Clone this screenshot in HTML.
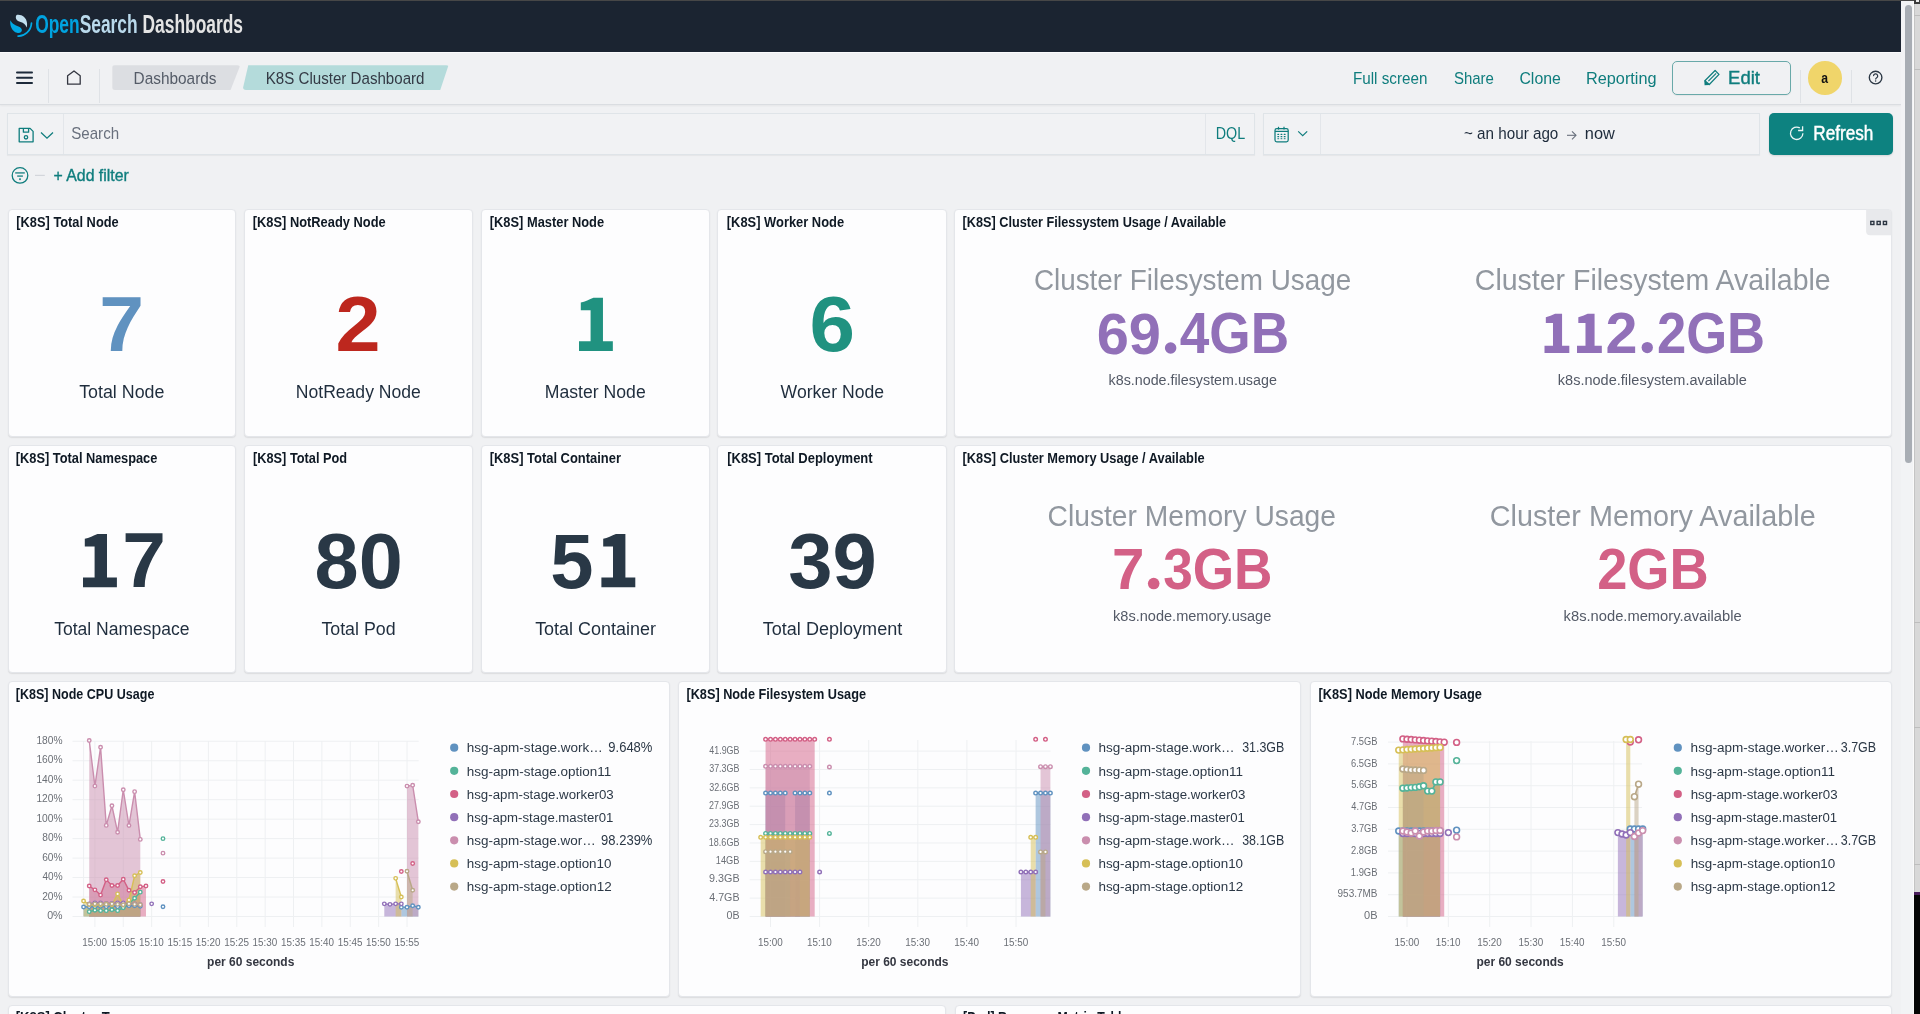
<!DOCTYPE html>
<html><head><meta charset="utf-8"><title>K8S Cluster Dashboard - OpenSearch Dashboards</title>
<style>
html,body{margin:0;padding:0;width:1920px;height:1014px;overflow:hidden;background:#f0f1f3;font-family:"Liberation Sans",sans-serif;}
.abs{position:absolute}
#hdr{position:absolute;left:0;top:0;width:1901px;height:52px;background:#1b2431;box-sizing:border-box}
#nav{position:absolute;left:0;top:52px;width:1901px;height:52.5px;background:#f0f1f3;border-top:1px solid #fbfbfc;border-bottom:1px solid #dadde1;box-sizing:border-box;box-shadow:0 1px 2px rgba(0,0,0,.05)}
.vdiv{position:absolute;width:1px;background:#dfe2e6}
.crumb1{position:absolute;left:112.3px;top:65.3px;width:128px;height:24.6px;background:#dcdee2;border-radius:3px;clip-path:polygon(0 0,100% 0,92.4% 100%,0 100%)}
.crumb2{position:absolute;left:242.5px;top:65.3px;width:206px;height:24.6px;background:#b4dbdb;border-radius:3px;clip-path:polygon(2.8% 0,100% 0,96% 100%,0 100%)}
.btn-edit{position:absolute;left:1672.3px;top:61.1px;width:118.5px;height:34.1px;box-sizing:border-box;border:1px solid #69a9a9;border-radius:5px;background:#f0f1f3;box-shadow:0 1px 1px rgba(0,0,0,.05)}
.avatar{position:absolute;left:1808.2px;top:61.2px;width:33.6px;height:33.6px;border-radius:50%;background:#f0d56a}
.box{position:absolute;box-sizing:border-box;border:1px solid #dfe4e8;background:#f1f2f4;box-shadow:0 1px 1px rgba(0,0,0,.04)}
.refresh{position:absolute;left:1768.6px;top:112.9px;width:124.3px;height:41.7px;background:#0d8280;border-radius:5px;box-shadow:0 1px 2px rgba(0,0,0,.12)}
.pnl{position:absolute;box-sizing:border-box;background:#fdfdfe;border:1px solid #e4e6ea;border-radius:4px;box-shadow:0 1px 1px rgba(0,0,0,.05),0 1px 2px rgba(0,0,0,.04)}
#sb{position:absolute;left:1901px;top:1px;width:13.3px;height:1014px;background:#f2f3f5;box-sizing:border-box;border-right:1px solid #fafafa}
#sbt{position:absolute;left:1905px;top:4.5px;width:7px;height:458px;background:#a8adb4;border-radius:4px}
#edge{position:absolute;left:1914.3px;top:0;width:6px;height:1014px;background:#d8d8d8;border-left:1px solid #c4c4c4;box-sizing:border-box}
.eln{position:absolute;left:1914.3px;width:6px;height:1px;background:#bdbdbd}
svg.ov{position:absolute;left:0;top:0;width:1920px;height:1014px;overflow:visible;will-change:transform}
svg text{font-family:"Liberation Sans",sans-serif;white-space:pre}
</style></head><body>
<div id="hdr"></div>
<div id="nav"></div>
<div class="vdiv" style="left:48px;top:69.4px;height:33.6px"></div>
<div class="vdiv" style="left:99px;top:69.4px;height:33.6px"></div>
<div class="crumb1"></div><div class="crumb2"></div>
<div class="btn-edit"></div>
<div class="vdiv" style="left:1799.5px;top:69.5px;height:33.5px"></div>
<div class="avatar"></div>
<div class="vdiv" style="left:1851px;top:69.5px;height:33.5px"></div>
<div class="box" style="left:7px;top:112.8px;width:1247.5px;height:41.8px"></div>
<div class="vdiv" style="left:63px;top:114px;height:39.5px;background:#e3e6ea"></div>
<div class="vdiv" style="left:1205px;top:114px;height:39.5px;background:#e3e6ea"></div>
<div class="box" style="left:1262.9px;top:112.8px;width:497.1px;height:41.8px"></div>
<div class="vdiv" style="left:1320px;top:114px;height:39.5px;background:#e3e6ea"></div>
<div class="refresh"></div>
<div class="pnl" style="left:7.50px;top:209.20px;width:228.10px;height:227.60px"></div><div class="pnl" style="left:244.40px;top:209.20px;width:228.40px;height:227.60px"></div><div class="pnl" style="left:480.80px;top:209.20px;width:229.00px;height:227.60px"></div><div class="pnl" style="left:717.10px;top:209.20px;width:229.80px;height:227.60px"></div><div class="pnl" style="left:953.90px;top:209.20px;width:937.90px;height:227.60px"></div><div class="pnl" style="left:7.50px;top:445.00px;width:228.10px;height:227.60px"></div><div class="pnl" style="left:244.40px;top:445.00px;width:228.40px;height:227.60px"></div><div class="pnl" style="left:480.80px;top:445.00px;width:229.00px;height:227.60px"></div><div class="pnl" style="left:717.10px;top:445.00px;width:229.80px;height:227.60px"></div><div class="pnl" style="left:953.90px;top:445.00px;width:937.90px;height:227.60px"></div><div class="pnl" style="left:7.50px;top:681.10px;width:662.10px;height:315.80px"></div><div class="pnl" style="left:678.00px;top:681.10px;width:623.40px;height:315.80px"></div><div class="pnl" style="left:1310.00px;top:681.10px;width:581.80px;height:315.80px"></div><div class="pnl" style="left:7.50px;top:1005.40px;width:938.00px;height:95.10px"></div><div class="pnl" style="left:954.50px;top:1005.40px;width:937.30px;height:95.10px"></div>
<div id="sb"></div><div id="sbt"></div><div id="edge"></div><div class="eln" style="top:14.5px"></div><div class="eln" style="top:69px"></div><div class="eln" style="top:622px"></div><div class="eln" style="top:727px"></div><div class="eln" style="top:863.5px"></div><div class="abs" style="left:1914.3px;top:892px;width:6px;height:122px;background:#050505;border-top:3px solid #4a1d5c;box-sizing:border-box"></div><div class="abs" style="left:0;top:0;width:1920px;height:1px;background:#474747"></div><div class="abs" style="left:1914.3px;top:0;width:5.7px;height:3.5px;background:#3a3a3a"></div><div class="abs" style="left:1916.3px;top:0;width:3px;height:2px;background:#e9e9e9"></div>
<svg class="ov" viewBox="0 0 1920 1014">
<line x1="72.5" y1="916.50" x2="418.7" y2="916.50" stroke="#eef0f2" stroke-width="1"/><line x1="72.5" y1="897.03" x2="418.7" y2="897.03" stroke="#eef0f2" stroke-width="1"/><line x1="72.5" y1="877.56" x2="418.7" y2="877.56" stroke="#eef0f2" stroke-width="1"/><line x1="72.5" y1="858.09" x2="418.7" y2="858.09" stroke="#eef0f2" stroke-width="1"/><line x1="72.5" y1="838.62" x2="418.7" y2="838.62" stroke="#eef0f2" stroke-width="1"/><line x1="72.5" y1="819.15" x2="418.7" y2="819.15" stroke="#eef0f2" stroke-width="1"/><line x1="72.5" y1="799.68" x2="418.7" y2="799.68" stroke="#eef0f2" stroke-width="1"/><line x1="72.5" y1="780.21" x2="418.7" y2="780.21" stroke="#eef0f2" stroke-width="1"/><line x1="72.5" y1="760.74" x2="418.7" y2="760.74" stroke="#eef0f2" stroke-width="1"/><line x1="72.5" y1="741.27" x2="418.7" y2="741.27" stroke="#eef0f2" stroke-width="1"/><line x1="94.90" y1="741" x2="94.90" y2="916.5" stroke="#eef0f2" stroke-width="1"/><line x1="94.90" y1="916.5" x2="94.90" y2="927.0" stroke="#eef0f2" stroke-width="1"/><line x1="123.27" y1="741" x2="123.27" y2="916.5" stroke="#eef0f2" stroke-width="1"/><line x1="123.27" y1="916.5" x2="123.27" y2="927.0" stroke="#eef0f2" stroke-width="1"/><line x1="151.65" y1="741" x2="151.65" y2="916.5" stroke="#eef0f2" stroke-width="1"/><line x1="151.65" y1="916.5" x2="151.65" y2="927.0" stroke="#eef0f2" stroke-width="1"/><line x1="180.02" y1="741" x2="180.02" y2="916.5" stroke="#eef0f2" stroke-width="1"/><line x1="180.02" y1="916.5" x2="180.02" y2="927.0" stroke="#eef0f2" stroke-width="1"/><line x1="208.39" y1="741" x2="208.39" y2="916.5" stroke="#eef0f2" stroke-width="1"/><line x1="208.39" y1="916.5" x2="208.39" y2="927.0" stroke="#eef0f2" stroke-width="1"/><line x1="236.76" y1="741" x2="236.76" y2="916.5" stroke="#eef0f2" stroke-width="1"/><line x1="236.76" y1="916.5" x2="236.76" y2="927.0" stroke="#eef0f2" stroke-width="1"/><line x1="265.14" y1="741" x2="265.14" y2="916.5" stroke="#eef0f2" stroke-width="1"/><line x1="265.14" y1="916.5" x2="265.14" y2="927.0" stroke="#eef0f2" stroke-width="1"/><line x1="293.51" y1="741" x2="293.51" y2="916.5" stroke="#eef0f2" stroke-width="1"/><line x1="293.51" y1="916.5" x2="293.51" y2="927.0" stroke="#eef0f2" stroke-width="1"/><line x1="321.88" y1="741" x2="321.88" y2="916.5" stroke="#eef0f2" stroke-width="1"/><line x1="321.88" y1="916.5" x2="321.88" y2="927.0" stroke="#eef0f2" stroke-width="1"/><line x1="350.25" y1="741" x2="350.25" y2="916.5" stroke="#eef0f2" stroke-width="1"/><line x1="350.25" y1="916.5" x2="350.25" y2="927.0" stroke="#eef0f2" stroke-width="1"/><line x1="378.63" y1="741" x2="378.63" y2="916.5" stroke="#eef0f2" stroke-width="1"/><line x1="378.63" y1="916.5" x2="378.63" y2="927.0" stroke="#eef0f2" stroke-width="1"/><line x1="407.00" y1="741" x2="407.00" y2="916.5" stroke="#eef0f2" stroke-width="1"/><line x1="407.00" y1="916.5" x2="407.00" y2="927.0" stroke="#eef0f2" stroke-width="1"/><line x1="83.6" y1="741" x2="83.6" y2="916.5" stroke="#eef0f2" stroke-width="1"/><path d="M83.55,916.50 L83.55,907.06 L89.23,906.77 L94.90,906.77 L100.57,906.28 L106.25,906.77 L111.92,905.79 L117.60,906.77 L123.27,906.77 L128.95,905.79 L134.62,905.79 L140.30,906.28 L140.30,916.50 Z" fill="#6092c0" fill-opacity="0.5"/><path d="M401.33,916.50 L401.33,907.25 L407.00,907.25 L412.67,905.79 L418.35,907.25 L418.35,916.50 Z" fill="#6092c0" fill-opacity="0.5"/><path d="M89.23,916.50 L89.23,911.63 L94.90,910.27 L100.57,910.66 L106.25,910.66 L111.92,909.69 L117.60,910.66 L123.27,907.74 L128.95,903.85 L134.62,898.30 L140.30,892.17 L140.30,916.50 Z" fill="#54b399" fill-opacity="0.5"/><path d="M89.23,916.50 L89.23,886.04 L94.90,889.83 L100.57,895.09 L106.25,879.71 L111.92,885.55 L117.60,885.55 L123.27,879.22 L128.95,890.32 L134.62,892.46 L140.30,886.81 L145.97,886.04 L145.97,916.50 Z" fill="#d36086" fill-opacity="0.5"/><path d="M89.23,916.50 L89.23,903.85 L94.90,902.87 L100.57,902.87 L106.25,903.36 L111.92,903.36 L117.60,902.87 L123.27,902.87 L128.95,903.85 L134.62,903.85 L140.30,904.82 L140.30,916.50 Z" fill="#9170b8" fill-opacity="0.5"/><path d="M384.30,916.50 L384.30,903.85 L389.98,904.33 L395.65,903.85 L401.33,903.85 L401.33,916.50 Z" fill="#9170b8" fill-opacity="0.5"/><path d="M89.23,916.50 L89.23,740.53 L94.90,786.08 L100.57,747.24 L106.25,825.40 L111.92,805.74 L117.60,832.21 L123.27,789.78 L128.95,825.50 L134.62,791.63 L140.30,839.41 L140.30,916.50 Z" fill="#ca8eae" fill-opacity="0.5"/><path d="M407.00,916.50 L407.00,786.08 L412.67,785.20 L418.35,821.80 L418.35,916.50 Z" fill="#ca8eae" fill-opacity="0.5"/><path d="M83.55,916.50 L83.55,900.93 L89.23,904.63 L94.90,904.82 L100.57,904.82 L106.25,903.85 L111.92,904.82 L117.60,893.92 L123.27,905.11 L128.95,900.05 L134.62,875.82 L140.30,872.51 L140.30,916.50 Z" fill="#d6bf57" fill-opacity="0.5"/><path d="M395.65,916.50 L395.65,878.35 L401.33,897.03 L401.33,916.50 Z" fill="#d6bf57" fill-opacity="0.5"/><path d="M89.23,916.50 L89.23,904.33 L94.90,903.85 L100.57,903.85 L106.25,904.33 L111.92,903.85 L117.60,904.33 L123.27,904.82 L128.95,903.85 L134.62,904.33 L140.30,904.82 L140.30,916.50 Z" fill="#b9a888" fill-opacity="0.5"/><path d="M407.00,916.50 L407.00,871.24 L412.67,890.32 L412.67,916.50 Z" fill="#b9a888" fill-opacity="0.5"/><path d="M83.55,907.06 L89.23,906.77 L94.90,906.77 L100.57,906.28 L106.25,906.77 L111.92,905.79 L117.60,906.77 L123.27,906.77 L128.95,905.79 L134.62,905.79 L140.30,906.28" fill="none" stroke="#6092c0" stroke-width="1.4"/><path d="M401.33,907.25 L407.00,907.25 L412.67,905.79 L418.35,907.25" fill="none" stroke="#6092c0" stroke-width="1.4"/><path d="M89.23,911.63 L94.90,910.27 L100.57,910.66 L106.25,910.66 L111.92,909.69 L117.60,910.66 L123.27,907.74 L128.95,903.85 L134.62,898.30 L140.30,892.17" fill="none" stroke="#54b399" stroke-width="1.4"/><path d="M89.23,886.04 L94.90,889.83 L100.57,895.09 L106.25,879.71 L111.92,885.55 L117.60,885.55 L123.27,879.22 L128.95,890.32 L134.62,892.46 L140.30,886.81 L145.97,886.04" fill="none" stroke="#d36086" stroke-width="1.4"/><path d="M89.23,903.85 L94.90,902.87 L100.57,902.87 L106.25,903.36 L111.92,903.36 L117.60,902.87 L123.27,902.87 L128.95,903.85 L134.62,903.85 L140.30,904.82" fill="none" stroke="#9170b8" stroke-width="1.4"/><path d="M384.30,903.85 L389.98,904.33 L395.65,903.85 L401.33,903.85" fill="none" stroke="#9170b8" stroke-width="1.4"/><path d="M89.23,740.53 L94.90,786.08 L100.57,747.24 L106.25,825.40 L111.92,805.74 L117.60,832.21 L123.27,789.78 L128.95,825.50 L134.62,791.63 L140.30,839.41" fill="none" stroke="#ca8eae" stroke-width="1.4"/><path d="M407.00,786.08 L412.67,785.20 L418.35,821.80" fill="none" stroke="#ca8eae" stroke-width="1.4"/><path d="M83.55,900.93 L89.23,904.63 L94.90,904.82 L100.57,904.82 L106.25,903.85 L111.92,904.82 L117.60,893.92 L123.27,905.11 L128.95,900.05 L134.62,875.82 L140.30,872.51" fill="none" stroke="#d6bf57" stroke-width="1.4"/><path d="M395.65,878.35 L401.33,897.03" fill="none" stroke="#d6bf57" stroke-width="1.4"/><path d="M89.23,904.33 L94.90,903.85 L100.57,903.85 L106.25,904.33 L111.92,903.85 L117.60,904.33 L123.27,904.82 L128.95,903.85 L134.62,904.33 L140.30,904.82" fill="none" stroke="#b9a888" stroke-width="1.4"/><path d="M407.00,871.24 L412.67,890.32" fill="none" stroke="#b9a888" stroke-width="1.4"/><circle cx="83.55" cy="907.06" r="1.75" fill="#fff" stroke="#6092c0" stroke-width="1.4"/><circle cx="89.23" cy="906.77" r="1.75" fill="#fff" stroke="#6092c0" stroke-width="1.4"/><circle cx="94.90" cy="906.77" r="1.75" fill="#fff" stroke="#6092c0" stroke-width="1.4"/><circle cx="100.57" cy="906.28" r="1.75" fill="#fff" stroke="#6092c0" stroke-width="1.4"/><circle cx="106.25" cy="906.77" r="1.75" fill="#fff" stroke="#6092c0" stroke-width="1.4"/><circle cx="111.92" cy="905.79" r="1.75" fill="#fff" stroke="#6092c0" stroke-width="1.4"/><circle cx="117.60" cy="906.77" r="1.75" fill="#fff" stroke="#6092c0" stroke-width="1.4"/><circle cx="123.27" cy="906.77" r="1.75" fill="#fff" stroke="#6092c0" stroke-width="1.4"/><circle cx="128.95" cy="905.79" r="1.75" fill="#fff" stroke="#6092c0" stroke-width="1.4"/><circle cx="134.62" cy="905.79" r="1.75" fill="#fff" stroke="#6092c0" stroke-width="1.4"/><circle cx="140.30" cy="906.28" r="1.75" fill="#fff" stroke="#6092c0" stroke-width="1.4"/><circle cx="162.99" cy="906.77" r="1.75" fill="#fff" stroke="#6092c0" stroke-width="1.4"/><circle cx="401.33" cy="907.25" r="1.75" fill="#fff" stroke="#6092c0" stroke-width="1.4"/><circle cx="407.00" cy="907.25" r="1.75" fill="#fff" stroke="#6092c0" stroke-width="1.4"/><circle cx="412.67" cy="905.79" r="1.75" fill="#fff" stroke="#6092c0" stroke-width="1.4"/><circle cx="418.35" cy="907.25" r="1.75" fill="#fff" stroke="#6092c0" stroke-width="1.4"/><circle cx="89.23" cy="911.63" r="1.75" fill="#fff" stroke="#54b399" stroke-width="1.4"/><circle cx="94.90" cy="910.27" r="1.75" fill="#fff" stroke="#54b399" stroke-width="1.4"/><circle cx="100.57" cy="910.66" r="1.75" fill="#fff" stroke="#54b399" stroke-width="1.4"/><circle cx="106.25" cy="910.66" r="1.75" fill="#fff" stroke="#54b399" stroke-width="1.4"/><circle cx="111.92" cy="909.69" r="1.75" fill="#fff" stroke="#54b399" stroke-width="1.4"/><circle cx="117.60" cy="910.66" r="1.75" fill="#fff" stroke="#54b399" stroke-width="1.4"/><circle cx="123.27" cy="907.74" r="1.75" fill="#fff" stroke="#54b399" stroke-width="1.4"/><circle cx="128.95" cy="903.85" r="1.75" fill="#fff" stroke="#54b399" stroke-width="1.4"/><circle cx="134.62" cy="898.30" r="1.75" fill="#fff" stroke="#54b399" stroke-width="1.4"/><circle cx="140.30" cy="892.17" r="1.75" fill="#fff" stroke="#54b399" stroke-width="1.4"/><circle cx="162.99" cy="838.64" r="1.75" fill="#fff" stroke="#54b399" stroke-width="1.4"/><circle cx="89.23" cy="886.04" r="1.75" fill="#fff" stroke="#d36086" stroke-width="1.4"/><circle cx="94.90" cy="889.83" r="1.75" fill="#fff" stroke="#d36086" stroke-width="1.4"/><circle cx="100.57" cy="895.09" r="1.75" fill="#fff" stroke="#d36086" stroke-width="1.4"/><circle cx="106.25" cy="879.71" r="1.75" fill="#fff" stroke="#d36086" stroke-width="1.4"/><circle cx="111.92" cy="885.55" r="1.75" fill="#fff" stroke="#d36086" stroke-width="1.4"/><circle cx="117.60" cy="885.55" r="1.75" fill="#fff" stroke="#d36086" stroke-width="1.4"/><circle cx="123.27" cy="879.22" r="1.75" fill="#fff" stroke="#d36086" stroke-width="1.4"/><circle cx="128.95" cy="890.32" r="1.75" fill="#fff" stroke="#d36086" stroke-width="1.4"/><circle cx="134.62" cy="892.46" r="1.75" fill="#fff" stroke="#d36086" stroke-width="1.4"/><circle cx="140.30" cy="886.81" r="1.75" fill="#fff" stroke="#d36086" stroke-width="1.4"/><circle cx="145.97" cy="886.04" r="1.75" fill="#fff" stroke="#d36086" stroke-width="1.4"/><circle cx="162.99" cy="881.46" r="1.75" fill="#fff" stroke="#d36086" stroke-width="1.4"/><circle cx="401.33" cy="871.53" r="1.75" fill="#fff" stroke="#d36086" stroke-width="1.4"/><circle cx="412.67" cy="863.55" r="1.75" fill="#fff" stroke="#d36086" stroke-width="1.4"/><circle cx="89.23" cy="903.85" r="1.75" fill="#fff" stroke="#9170b8" stroke-width="1.4"/><circle cx="94.90" cy="902.87" r="1.75" fill="#fff" stroke="#9170b8" stroke-width="1.4"/><circle cx="100.57" cy="902.87" r="1.75" fill="#fff" stroke="#9170b8" stroke-width="1.4"/><circle cx="106.25" cy="903.36" r="1.75" fill="#fff" stroke="#9170b8" stroke-width="1.4"/><circle cx="111.92" cy="903.36" r="1.75" fill="#fff" stroke="#9170b8" stroke-width="1.4"/><circle cx="117.60" cy="902.87" r="1.75" fill="#fff" stroke="#9170b8" stroke-width="1.4"/><circle cx="123.27" cy="902.87" r="1.75" fill="#fff" stroke="#9170b8" stroke-width="1.4"/><circle cx="128.95" cy="903.85" r="1.75" fill="#fff" stroke="#9170b8" stroke-width="1.4"/><circle cx="134.62" cy="903.85" r="1.75" fill="#fff" stroke="#9170b8" stroke-width="1.4"/><circle cx="140.30" cy="904.82" r="1.75" fill="#fff" stroke="#9170b8" stroke-width="1.4"/><circle cx="151.65" cy="903.85" r="1.75" fill="#fff" stroke="#9170b8" stroke-width="1.4"/><circle cx="384.30" cy="903.85" r="1.75" fill="#fff" stroke="#9170b8" stroke-width="1.4"/><circle cx="389.98" cy="904.33" r="1.75" fill="#fff" stroke="#9170b8" stroke-width="1.4"/><circle cx="395.65" cy="903.85" r="1.75" fill="#fff" stroke="#9170b8" stroke-width="1.4"/><circle cx="401.33" cy="903.85" r="1.75" fill="#fff" stroke="#9170b8" stroke-width="1.4"/><circle cx="89.23" cy="740.53" r="1.75" fill="#fff" stroke="#ca8eae" stroke-width="1.4"/><circle cx="94.90" cy="786.08" r="1.75" fill="#fff" stroke="#ca8eae" stroke-width="1.4"/><circle cx="100.57" cy="747.24" r="1.75" fill="#fff" stroke="#ca8eae" stroke-width="1.4"/><circle cx="106.25" cy="825.40" r="1.75" fill="#fff" stroke="#ca8eae" stroke-width="1.4"/><circle cx="111.92" cy="805.74" r="1.75" fill="#fff" stroke="#ca8eae" stroke-width="1.4"/><circle cx="117.60" cy="832.21" r="1.75" fill="#fff" stroke="#ca8eae" stroke-width="1.4"/><circle cx="123.27" cy="789.78" r="1.75" fill="#fff" stroke="#ca8eae" stroke-width="1.4"/><circle cx="128.95" cy="825.50" r="1.75" fill="#fff" stroke="#ca8eae" stroke-width="1.4"/><circle cx="134.62" cy="791.63" r="1.75" fill="#fff" stroke="#ca8eae" stroke-width="1.4"/><circle cx="140.30" cy="839.41" r="1.75" fill="#fff" stroke="#ca8eae" stroke-width="1.4"/><circle cx="162.99" cy="853.14" r="1.75" fill="#fff" stroke="#ca8eae" stroke-width="1.4"/><circle cx="407.00" cy="786.08" r="1.75" fill="#fff" stroke="#ca8eae" stroke-width="1.4"/><circle cx="412.67" cy="785.20" r="1.75" fill="#fff" stroke="#ca8eae" stroke-width="1.4"/><circle cx="418.35" cy="821.80" r="1.75" fill="#fff" stroke="#ca8eae" stroke-width="1.4"/><circle cx="83.55" cy="900.93" r="1.75" fill="#fff" stroke="#d6bf57" stroke-width="1.4"/><circle cx="89.23" cy="904.63" r="1.75" fill="#fff" stroke="#d6bf57" stroke-width="1.4"/><circle cx="94.90" cy="904.82" r="1.75" fill="#fff" stroke="#d6bf57" stroke-width="1.4"/><circle cx="100.57" cy="904.82" r="1.75" fill="#fff" stroke="#d6bf57" stroke-width="1.4"/><circle cx="106.25" cy="903.85" r="1.75" fill="#fff" stroke="#d6bf57" stroke-width="1.4"/><circle cx="111.92" cy="904.82" r="1.75" fill="#fff" stroke="#d6bf57" stroke-width="1.4"/><circle cx="117.60" cy="893.92" r="1.75" fill="#fff" stroke="#d6bf57" stroke-width="1.4"/><circle cx="123.27" cy="905.11" r="1.75" fill="#fff" stroke="#d6bf57" stroke-width="1.4"/><circle cx="128.95" cy="900.05" r="1.75" fill="#fff" stroke="#d6bf57" stroke-width="1.4"/><circle cx="134.62" cy="875.82" r="1.75" fill="#fff" stroke="#d6bf57" stroke-width="1.4"/><circle cx="140.30" cy="872.51" r="1.75" fill="#fff" stroke="#d6bf57" stroke-width="1.4"/><circle cx="395.65" cy="878.35" r="1.75" fill="#fff" stroke="#d6bf57" stroke-width="1.4"/><circle cx="401.33" cy="897.03" r="1.75" fill="#fff" stroke="#d6bf57" stroke-width="1.4"/><circle cx="89.23" cy="904.33" r="1.75" fill="#fff" stroke="#b9a888" stroke-width="1.4"/><circle cx="94.90" cy="903.85" r="1.75" fill="#fff" stroke="#b9a888" stroke-width="1.4"/><circle cx="100.57" cy="903.85" r="1.75" fill="#fff" stroke="#b9a888" stroke-width="1.4"/><circle cx="106.25" cy="904.33" r="1.75" fill="#fff" stroke="#b9a888" stroke-width="1.4"/><circle cx="111.92" cy="903.85" r="1.75" fill="#fff" stroke="#b9a888" stroke-width="1.4"/><circle cx="117.60" cy="904.33" r="1.75" fill="#fff" stroke="#b9a888" stroke-width="1.4"/><circle cx="123.27" cy="904.82" r="1.75" fill="#fff" stroke="#b9a888" stroke-width="1.4"/><circle cx="128.95" cy="903.85" r="1.75" fill="#fff" stroke="#b9a888" stroke-width="1.4"/><circle cx="134.62" cy="904.33" r="1.75" fill="#fff" stroke="#b9a888" stroke-width="1.4"/><circle cx="140.30" cy="904.82" r="1.75" fill="#fff" stroke="#b9a888" stroke-width="1.4"/><circle cx="407.00" cy="871.24" r="1.75" fill="#fff" stroke="#b9a888" stroke-width="1.4"/><circle cx="412.67" cy="890.32" r="1.75" fill="#fff" stroke="#b9a888" stroke-width="1.4"/><line x1="749.7" y1="916.50" x2="1050.5" y2="916.50" stroke="#eef0f2" stroke-width="1"/><line x1="749.7" y1="898.12" x2="1050.5" y2="898.12" stroke="#eef0f2" stroke-width="1"/><line x1="749.7" y1="879.74" x2="1050.5" y2="879.74" stroke="#eef0f2" stroke-width="1"/><line x1="749.7" y1="861.36" x2="1050.5" y2="861.36" stroke="#eef0f2" stroke-width="1"/><line x1="749.7" y1="842.98" x2="1050.5" y2="842.98" stroke="#eef0f2" stroke-width="1"/><line x1="749.7" y1="824.60" x2="1050.5" y2="824.60" stroke="#eef0f2" stroke-width="1"/><line x1="749.7" y1="806.22" x2="1050.5" y2="806.22" stroke="#eef0f2" stroke-width="1"/><line x1="749.7" y1="787.84" x2="1050.5" y2="787.84" stroke="#eef0f2" stroke-width="1"/><line x1="749.7" y1="769.46" x2="1050.5" y2="769.46" stroke="#eef0f2" stroke-width="1"/><line x1="749.7" y1="751.08" x2="1050.5" y2="751.08" stroke="#eef0f2" stroke-width="1"/><line x1="770.50" y1="740" x2="770.50" y2="916.5" stroke="#eef0f2" stroke-width="1"/><line x1="770.50" y1="916.5" x2="770.50" y2="927.0" stroke="#eef0f2" stroke-width="1"/><line x1="819.60" y1="740" x2="819.60" y2="916.5" stroke="#eef0f2" stroke-width="1"/><line x1="819.60" y1="916.5" x2="819.60" y2="927.0" stroke="#eef0f2" stroke-width="1"/><line x1="868.70" y1="740" x2="868.70" y2="916.5" stroke="#eef0f2" stroke-width="1"/><line x1="868.70" y1="916.5" x2="868.70" y2="927.0" stroke="#eef0f2" stroke-width="1"/><line x1="917.80" y1="740" x2="917.80" y2="916.5" stroke="#eef0f2" stroke-width="1"/><line x1="917.80" y1="916.5" x2="917.80" y2="927.0" stroke="#eef0f2" stroke-width="1"/><line x1="966.90" y1="740" x2="966.90" y2="916.5" stroke="#eef0f2" stroke-width="1"/><line x1="966.90" y1="916.5" x2="966.90" y2="927.0" stroke="#eef0f2" stroke-width="1"/><line x1="1016.00" y1="740" x2="1016.00" y2="916.5" stroke="#eef0f2" stroke-width="1"/><line x1="1016.00" y1="916.5" x2="1016.00" y2="927.0" stroke="#eef0f2" stroke-width="1"/><path d="M765.59,916.50 L765.59,793.10 L770.50,793.10 L775.41,793.10 L780.32,793.10 L785.23,793.10 L785.23,916.50 Z" fill="#6092c0" fill-opacity="0.5"/><path d="M795.05,916.50 L795.05,793.10 L799.96,793.10 L804.87,793.10 L809.78,793.10 L809.78,916.50 Z" fill="#6092c0" fill-opacity="0.5"/><path d="M1035.64,916.50 L1035.64,793.10 L1040.55,793.10 L1045.46,793.10 L1050.37,793.10 L1050.37,916.50 Z" fill="#6092c0" fill-opacity="0.5"/><path d="M765.59,916.50 L765.59,833.40 L770.50,833.40 L775.41,833.40 L780.32,833.40 L785.23,833.40 L790.14,833.40 L795.05,833.40 L799.96,833.40 L804.87,833.40 L809.78,833.40 L809.78,916.50 Z" fill="#54b399" fill-opacity="0.5"/><path d="M765.59,916.50 L765.59,739.30 L770.50,739.30 L775.41,739.30 L780.32,739.30 L785.23,739.30 L790.14,739.30 L795.05,739.30 L799.96,739.30 L804.87,739.30 L809.78,739.30 L814.69,739.30 L814.69,916.50 Z" fill="#d36086" fill-opacity="0.5"/><path d="M765.59,916.50 L765.59,872.00 L770.50,872.00 L775.41,872.00 L780.32,872.00 L785.23,872.00 L790.14,872.00 L795.05,872.00 L799.96,872.00 L799.96,916.50 Z" fill="#9170b8" fill-opacity="0.5"/><path d="M1020.91,916.50 L1020.91,872.00 L1025.82,872.00 L1030.73,872.00 L1035.64,872.00 L1035.64,916.50 Z" fill="#9170b8" fill-opacity="0.5"/><path d="M765.59,916.50 L765.59,766.30 L770.50,766.30 L775.41,766.30 L780.32,766.30 L785.23,766.30 L790.14,766.30 L795.05,766.30 L799.96,766.30 L804.87,766.30 L809.78,766.30 L809.78,916.50 Z" fill="#ca8eae" fill-opacity="0.5"/><path d="M1040.55,916.50 L1040.55,766.70 L1045.46,766.70 L1050.37,766.70 L1050.37,916.50 Z" fill="#ca8eae" fill-opacity="0.5"/><path d="M760.68,916.50 L760.68,837.30 L765.59,837.30 L770.50,837.30 L775.41,837.30 L780.32,837.30 L785.23,837.30 L790.14,837.30 L795.05,837.30 L799.96,837.30 L804.87,837.30 L809.78,837.30 L809.78,916.50 Z" fill="#d6bf57" fill-opacity="0.5"/><path d="M1030.73,916.50 L1030.73,837.30 L1035.64,837.30 L1035.64,916.50 Z" fill="#d6bf57" fill-opacity="0.5"/><path d="M765.59,916.50 L765.59,851.70 L770.50,851.70 L775.41,851.70 L780.32,851.70 L785.23,851.70 L790.14,851.70 L790.14,916.50 Z" fill="#b9a888" fill-opacity="0.5"/><path d="M1040.55,916.50 L1040.55,851.90 L1045.46,851.90 L1045.46,916.50 Z" fill="#b9a888" fill-opacity="0.5"/><path d="M765.59,793.10 L770.50,793.10 L775.41,793.10 L780.32,793.10 L785.23,793.10" fill="none" stroke="#6092c0" stroke-width="1.4"/><path d="M795.05,793.10 L799.96,793.10 L804.87,793.10 L809.78,793.10" fill="none" stroke="#6092c0" stroke-width="1.4"/><path d="M1035.64,793.10 L1040.55,793.10 L1045.46,793.10 L1050.37,793.10" fill="none" stroke="#6092c0" stroke-width="1.4"/><path d="M765.59,833.40 L770.50,833.40 L775.41,833.40 L780.32,833.40 L785.23,833.40 L790.14,833.40 L795.05,833.40 L799.96,833.40 L804.87,833.40 L809.78,833.40" fill="none" stroke="#54b399" stroke-width="1.4"/><path d="M765.59,739.30 L770.50,739.30 L775.41,739.30 L780.32,739.30 L785.23,739.30 L790.14,739.30 L795.05,739.30 L799.96,739.30 L804.87,739.30 L809.78,739.30 L814.69,739.30" fill="none" stroke="#d36086" stroke-width="1.4"/><path d="M765.59,872.00 L770.50,872.00 L775.41,872.00 L780.32,872.00 L785.23,872.00 L790.14,872.00 L795.05,872.00 L799.96,872.00" fill="none" stroke="#9170b8" stroke-width="1.4"/><path d="M1020.91,872.00 L1025.82,872.00 L1030.73,872.00 L1035.64,872.00" fill="none" stroke="#9170b8" stroke-width="1.4"/><path d="M765.59,766.30 L770.50,766.30 L775.41,766.30 L780.32,766.30 L785.23,766.30 L790.14,766.30 L795.05,766.30 L799.96,766.30 L804.87,766.30 L809.78,766.30" fill="none" stroke="#ca8eae" stroke-width="1.4"/><path d="M1040.55,766.70 L1045.46,766.70 L1050.37,766.70" fill="none" stroke="#ca8eae" stroke-width="1.4"/><path d="M760.68,837.30 L765.59,837.30 L770.50,837.30 L775.41,837.30 L780.32,837.30 L785.23,837.30 L790.14,837.30 L795.05,837.30 L799.96,837.30 L804.87,837.30 L809.78,837.30" fill="none" stroke="#d6bf57" stroke-width="1.4"/><path d="M1030.73,837.30 L1035.64,837.30" fill="none" stroke="#d6bf57" stroke-width="1.4"/><path d="M765.59,851.70 L770.50,851.70 L775.41,851.70 L780.32,851.70 L785.23,851.70 L790.14,851.70" fill="none" stroke="#b9a888" stroke-width="1.4"/><path d="M1040.55,851.90 L1045.46,851.90" fill="none" stroke="#b9a888" stroke-width="1.4"/><circle cx="765.59" cy="793.10" r="1.8" fill="#fff" stroke="#6092c0" stroke-width="1.4"/><circle cx="770.50" cy="793.10" r="1.8" fill="#fff" stroke="#6092c0" stroke-width="1.4"/><circle cx="775.41" cy="793.10" r="1.8" fill="#fff" stroke="#6092c0" stroke-width="1.4"/><circle cx="780.32" cy="793.10" r="1.8" fill="#fff" stroke="#6092c0" stroke-width="1.4"/><circle cx="785.23" cy="793.10" r="1.8" fill="#fff" stroke="#6092c0" stroke-width="1.4"/><circle cx="795.05" cy="793.10" r="1.8" fill="#fff" stroke="#6092c0" stroke-width="1.4"/><circle cx="799.96" cy="793.10" r="1.8" fill="#fff" stroke="#6092c0" stroke-width="1.4"/><circle cx="804.87" cy="793.10" r="1.8" fill="#fff" stroke="#6092c0" stroke-width="1.4"/><circle cx="809.78" cy="793.10" r="1.8" fill="#fff" stroke="#6092c0" stroke-width="1.4"/><circle cx="829.42" cy="793.10" r="1.8" fill="#fff" stroke="#6092c0" stroke-width="1.4"/><circle cx="1035.64" cy="793.10" r="1.8" fill="#fff" stroke="#6092c0" stroke-width="1.4"/><circle cx="1040.55" cy="793.10" r="1.8" fill="#fff" stroke="#6092c0" stroke-width="1.4"/><circle cx="1045.46" cy="793.10" r="1.8" fill="#fff" stroke="#6092c0" stroke-width="1.4"/><circle cx="1050.37" cy="793.10" r="1.8" fill="#fff" stroke="#6092c0" stroke-width="1.4"/><circle cx="765.59" cy="833.40" r="1.8" fill="#fff" stroke="#54b399" stroke-width="1.4"/><circle cx="770.50" cy="833.40" r="1.8" fill="#fff" stroke="#54b399" stroke-width="1.4"/><circle cx="775.41" cy="833.40" r="1.8" fill="#fff" stroke="#54b399" stroke-width="1.4"/><circle cx="780.32" cy="833.40" r="1.8" fill="#fff" stroke="#54b399" stroke-width="1.4"/><circle cx="785.23" cy="833.40" r="1.8" fill="#fff" stroke="#54b399" stroke-width="1.4"/><circle cx="790.14" cy="833.40" r="1.8" fill="#fff" stroke="#54b399" stroke-width="1.4"/><circle cx="795.05" cy="833.40" r="1.8" fill="#fff" stroke="#54b399" stroke-width="1.4"/><circle cx="799.96" cy="833.40" r="1.8" fill="#fff" stroke="#54b399" stroke-width="1.4"/><circle cx="804.87" cy="833.40" r="1.8" fill="#fff" stroke="#54b399" stroke-width="1.4"/><circle cx="809.78" cy="833.40" r="1.8" fill="#fff" stroke="#54b399" stroke-width="1.4"/><circle cx="829.42" cy="833.40" r="1.8" fill="#fff" stroke="#54b399" stroke-width="1.4"/><circle cx="765.59" cy="739.30" r="1.8" fill="#fff" stroke="#d36086" stroke-width="1.4"/><circle cx="770.50" cy="739.30" r="1.8" fill="#fff" stroke="#d36086" stroke-width="1.4"/><circle cx="775.41" cy="739.30" r="1.8" fill="#fff" stroke="#d36086" stroke-width="1.4"/><circle cx="780.32" cy="739.30" r="1.8" fill="#fff" stroke="#d36086" stroke-width="1.4"/><circle cx="785.23" cy="739.30" r="1.8" fill="#fff" stroke="#d36086" stroke-width="1.4"/><circle cx="790.14" cy="739.30" r="1.8" fill="#fff" stroke="#d36086" stroke-width="1.4"/><circle cx="795.05" cy="739.30" r="1.8" fill="#fff" stroke="#d36086" stroke-width="1.4"/><circle cx="799.96" cy="739.30" r="1.8" fill="#fff" stroke="#d36086" stroke-width="1.4"/><circle cx="804.87" cy="739.30" r="1.8" fill="#fff" stroke="#d36086" stroke-width="1.4"/><circle cx="809.78" cy="739.30" r="1.8" fill="#fff" stroke="#d36086" stroke-width="1.4"/><circle cx="814.69" cy="739.30" r="1.8" fill="#fff" stroke="#d36086" stroke-width="1.4"/><circle cx="829.42" cy="739.30" r="1.8" fill="#fff" stroke="#d36086" stroke-width="1.4"/><circle cx="1035.64" cy="739.30" r="1.8" fill="#fff" stroke="#d36086" stroke-width="1.4"/><circle cx="1045.46" cy="739.30" r="1.8" fill="#fff" stroke="#d36086" stroke-width="1.4"/><circle cx="765.59" cy="872.00" r="1.8" fill="#fff" stroke="#9170b8" stroke-width="1.4"/><circle cx="770.50" cy="872.00" r="1.8" fill="#fff" stroke="#9170b8" stroke-width="1.4"/><circle cx="775.41" cy="872.00" r="1.8" fill="#fff" stroke="#9170b8" stroke-width="1.4"/><circle cx="780.32" cy="872.00" r="1.8" fill="#fff" stroke="#9170b8" stroke-width="1.4"/><circle cx="785.23" cy="872.00" r="1.8" fill="#fff" stroke="#9170b8" stroke-width="1.4"/><circle cx="790.14" cy="872.00" r="1.8" fill="#fff" stroke="#9170b8" stroke-width="1.4"/><circle cx="795.05" cy="872.00" r="1.8" fill="#fff" stroke="#9170b8" stroke-width="1.4"/><circle cx="799.96" cy="872.00" r="1.8" fill="#fff" stroke="#9170b8" stroke-width="1.4"/><circle cx="819.60" cy="872.00" r="1.8" fill="#fff" stroke="#9170b8" stroke-width="1.4"/><circle cx="1020.91" cy="872.00" r="1.8" fill="#fff" stroke="#9170b8" stroke-width="1.4"/><circle cx="1025.82" cy="872.00" r="1.8" fill="#fff" stroke="#9170b8" stroke-width="1.4"/><circle cx="1030.73" cy="872.00" r="1.8" fill="#fff" stroke="#9170b8" stroke-width="1.4"/><circle cx="1035.64" cy="872.00" r="1.8" fill="#fff" stroke="#9170b8" stroke-width="1.4"/><circle cx="765.59" cy="766.30" r="1.8" fill="#fff" stroke="#ca8eae" stroke-width="1.4"/><circle cx="770.50" cy="766.30" r="1.8" fill="#fff" stroke="#ca8eae" stroke-width="1.4"/><circle cx="775.41" cy="766.30" r="1.8" fill="#fff" stroke="#ca8eae" stroke-width="1.4"/><circle cx="780.32" cy="766.30" r="1.8" fill="#fff" stroke="#ca8eae" stroke-width="1.4"/><circle cx="785.23" cy="766.30" r="1.8" fill="#fff" stroke="#ca8eae" stroke-width="1.4"/><circle cx="790.14" cy="766.30" r="1.8" fill="#fff" stroke="#ca8eae" stroke-width="1.4"/><circle cx="795.05" cy="766.30" r="1.8" fill="#fff" stroke="#ca8eae" stroke-width="1.4"/><circle cx="799.96" cy="766.30" r="1.8" fill="#fff" stroke="#ca8eae" stroke-width="1.4"/><circle cx="804.87" cy="766.30" r="1.8" fill="#fff" stroke="#ca8eae" stroke-width="1.4"/><circle cx="809.78" cy="766.30" r="1.8" fill="#fff" stroke="#ca8eae" stroke-width="1.4"/><circle cx="829.42" cy="767.00" r="1.8" fill="#fff" stroke="#ca8eae" stroke-width="1.4"/><circle cx="1040.55" cy="766.70" r="1.8" fill="#fff" stroke="#ca8eae" stroke-width="1.4"/><circle cx="1045.46" cy="766.70" r="1.8" fill="#fff" stroke="#ca8eae" stroke-width="1.4"/><circle cx="1050.37" cy="766.70" r="1.8" fill="#fff" stroke="#ca8eae" stroke-width="1.4"/><circle cx="760.68" cy="837.30" r="1.8" fill="#fff" stroke="#d6bf57" stroke-width="1.4"/><circle cx="765.59" cy="837.30" r="1.8" fill="#fff" stroke="#d6bf57" stroke-width="1.4"/><circle cx="770.50" cy="837.30" r="1.8" fill="#fff" stroke="#d6bf57" stroke-width="1.4"/><circle cx="775.41" cy="837.30" r="1.8" fill="#fff" stroke="#d6bf57" stroke-width="1.4"/><circle cx="780.32" cy="837.30" r="1.8" fill="#fff" stroke="#d6bf57" stroke-width="1.4"/><circle cx="785.23" cy="837.30" r="1.8" fill="#fff" stroke="#d6bf57" stroke-width="1.4"/><circle cx="790.14" cy="837.30" r="1.8" fill="#fff" stroke="#d6bf57" stroke-width="1.4"/><circle cx="795.05" cy="837.30" r="1.8" fill="#fff" stroke="#d6bf57" stroke-width="1.4"/><circle cx="799.96" cy="837.30" r="1.8" fill="#fff" stroke="#d6bf57" stroke-width="1.4"/><circle cx="804.87" cy="837.30" r="1.8" fill="#fff" stroke="#d6bf57" stroke-width="1.4"/><circle cx="809.78" cy="837.30" r="1.8" fill="#fff" stroke="#d6bf57" stroke-width="1.4"/><circle cx="1030.73" cy="837.30" r="1.8" fill="#fff" stroke="#d6bf57" stroke-width="1.4"/><circle cx="1035.64" cy="837.30" r="1.8" fill="#fff" stroke="#d6bf57" stroke-width="1.4"/><circle cx="765.59" cy="851.70" r="1.8" fill="#fff" stroke="#b9a888" stroke-width="1.4"/><circle cx="770.50" cy="851.70" r="1.8" fill="#fff" stroke="#b9a888" stroke-width="1.4"/><circle cx="775.41" cy="851.70" r="1.8" fill="#fff" stroke="#b9a888" stroke-width="1.4"/><circle cx="780.32" cy="851.70" r="1.8" fill="#fff" stroke="#b9a888" stroke-width="1.4"/><circle cx="785.23" cy="851.70" r="1.8" fill="#fff" stroke="#b9a888" stroke-width="1.4"/><circle cx="790.14" cy="851.70" r="1.8" fill="#fff" stroke="#b9a888" stroke-width="1.4"/><circle cx="1040.55" cy="851.90" r="1.8" fill="#fff" stroke="#b9a888" stroke-width="1.4"/><circle cx="1045.46" cy="851.90" r="1.8" fill="#fff" stroke="#b9a888" stroke-width="1.4"/><line x1="1388" y1="916.50" x2="1642" y2="916.50" stroke="#eef0f2" stroke-width="1"/><line x1="1388" y1="894.70" x2="1642" y2="894.70" stroke="#eef0f2" stroke-width="1"/><line x1="1388" y1="872.90" x2="1642" y2="872.90" stroke="#eef0f2" stroke-width="1"/><line x1="1388" y1="851.10" x2="1642" y2="851.10" stroke="#eef0f2" stroke-width="1"/><line x1="1388" y1="829.30" x2="1642" y2="829.30" stroke="#eef0f2" stroke-width="1"/><line x1="1388" y1="807.50" x2="1642" y2="807.50" stroke="#eef0f2" stroke-width="1"/><line x1="1388" y1="785.70" x2="1642" y2="785.70" stroke="#eef0f2" stroke-width="1"/><line x1="1388" y1="763.90" x2="1642" y2="763.90" stroke="#eef0f2" stroke-width="1"/><line x1="1388" y1="742.10" x2="1642" y2="742.10" stroke="#eef0f2" stroke-width="1"/><line x1="1407.00" y1="741" x2="1407.00" y2="916.5" stroke="#eef0f2" stroke-width="1"/><line x1="1407.00" y1="916.5" x2="1407.00" y2="927.0" stroke="#eef0f2" stroke-width="1"/><line x1="1448.35" y1="741" x2="1448.35" y2="916.5" stroke="#eef0f2" stroke-width="1"/><line x1="1448.35" y1="916.5" x2="1448.35" y2="927.0" stroke="#eef0f2" stroke-width="1"/><line x1="1489.70" y1="741" x2="1489.70" y2="916.5" stroke="#eef0f2" stroke-width="1"/><line x1="1489.70" y1="916.5" x2="1489.70" y2="927.0" stroke="#eef0f2" stroke-width="1"/><line x1="1531.05" y1="741" x2="1531.05" y2="916.5" stroke="#eef0f2" stroke-width="1"/><line x1="1531.05" y1="916.5" x2="1531.05" y2="927.0" stroke="#eef0f2" stroke-width="1"/><line x1="1572.40" y1="741" x2="1572.40" y2="916.5" stroke="#eef0f2" stroke-width="1"/><line x1="1572.40" y1="916.5" x2="1572.40" y2="927.0" stroke="#eef0f2" stroke-width="1"/><line x1="1613.75" y1="741" x2="1613.75" y2="916.5" stroke="#eef0f2" stroke-width="1"/><line x1="1613.75" y1="916.5" x2="1613.75" y2="927.0" stroke="#eef0f2" stroke-width="1"/><path d="M1398.73,916.50 L1398.73,831.00 L1402.87,831.00 L1407.00,831.00 L1411.13,831.00 L1415.27,831.00 L1419.40,831.00 L1423.54,831.00 L1427.67,831.00 L1431.81,831.00 L1435.94,831.00 L1440.08,831.00 L1440.08,916.50 Z" fill="#6092c0" fill-opacity="0.5"/><path d="M1630.29,916.50 L1630.29,829.00 L1634.42,829.00 L1638.56,829.00 L1642.69,829.00 L1642.69,916.50 Z" fill="#6092c0" fill-opacity="0.5"/><path d="M1402.87,916.50 L1402.87,788.20 L1407.00,788.00 L1411.13,787.60 L1415.27,787.40 L1419.40,786.80 L1423.54,785.80 L1427.67,791.10 L1431.81,791.10 L1435.94,781.90 L1440.08,781.90 L1440.08,916.50 Z" fill="#54b399" fill-opacity="0.5"/><path d="M1402.87,916.50 L1402.87,738.90 L1407.00,739.23 L1411.13,739.56 L1415.27,739.89 L1419.40,740.22 L1423.54,740.55 L1427.67,740.88 L1431.81,741.21 L1435.94,741.54 L1440.08,741.87 L1444.21,742.20 L1444.21,916.50 Z" fill="#d36086" fill-opacity="0.5"/><path d="M1402.87,916.50 L1402.87,833.50 L1407.00,833.50 L1411.13,833.50 L1415.27,833.50 L1419.40,833.50 L1423.54,833.50 L1427.67,833.50 L1431.81,833.50 L1435.94,833.50 L1440.08,833.50 L1440.08,916.50 Z" fill="#9170b8" fill-opacity="0.5"/><path d="M1617.88,916.50 L1617.88,832.60 L1622.02,834.00 L1626.15,835.00 L1630.29,832.60 L1630.29,916.50 Z" fill="#9170b8" fill-opacity="0.5"/><path d="M1402.87,916.50 L1402.87,831.00 L1407.00,832.00 L1411.13,833.00 L1415.27,831.00 L1419.40,836.00 L1423.54,832.00 L1427.67,831.00 L1431.81,831.00 L1435.94,830.50 L1440.08,830.50 L1440.08,916.50 Z" fill="#ca8eae" fill-opacity="0.5"/><path d="M1634.42,916.50 L1634.42,836.50 L1638.56,833.00 L1642.69,830.60 L1642.69,916.50 Z" fill="#ca8eae" fill-opacity="0.5"/><path d="M1398.73,916.50 L1398.73,750.10 L1402.87,749.83 L1407.00,749.56 L1411.13,749.29 L1415.27,749.02 L1419.40,748.75 L1423.54,748.48 L1427.67,748.21 L1431.81,747.94 L1435.94,747.67 L1440.08,747.40 L1440.08,916.50 Z" fill="#d6bf57" fill-opacity="0.5"/><path d="M1626.15,916.50 L1626.15,739.50 L1630.29,739.50 L1630.29,916.50 Z" fill="#d6bf57" fill-opacity="0.5"/><path d="M1402.87,916.50 L1402.87,769.00 L1407.00,769.50 L1411.13,770.00 L1415.27,770.00 L1419.40,770.20 L1423.54,770.40 L1423.54,916.50 Z" fill="#b9a888" fill-opacity="0.5"/><path d="M1634.42,916.50 L1634.42,796.70 L1638.56,784.20 L1638.56,916.50 Z" fill="#b9a888" fill-opacity="0.5"/><path d="M1398.73,831.00 L1402.87,831.00 L1407.00,831.00 L1411.13,831.00 L1415.27,831.00 L1419.40,831.00 L1423.54,831.00 L1427.67,831.00 L1431.81,831.00 L1435.94,831.00 L1440.08,831.00" fill="none" stroke="#6092c0" stroke-width="1.6"/><path d="M1630.29,829.00 L1634.42,829.00 L1638.56,829.00 L1642.69,829.00" fill="none" stroke="#6092c0" stroke-width="1.6"/><path d="M1402.87,788.20 L1407.00,788.00 L1411.13,787.60 L1415.27,787.40 L1419.40,786.80 L1423.54,785.80 L1427.67,791.10 L1431.81,791.10 L1435.94,781.90 L1440.08,781.90" fill="none" stroke="#54b399" stroke-width="1.6"/><path d="M1402.87,738.90 L1407.00,739.23 L1411.13,739.56 L1415.27,739.89 L1419.40,740.22 L1423.54,740.55 L1427.67,740.88 L1431.81,741.21 L1435.94,741.54 L1440.08,741.87 L1444.21,742.20" fill="none" stroke="#d36086" stroke-width="1.6"/><path d="M1402.87,833.50 L1407.00,833.50 L1411.13,833.50 L1415.27,833.50 L1419.40,833.50 L1423.54,833.50 L1427.67,833.50 L1431.81,833.50 L1435.94,833.50 L1440.08,833.50" fill="none" stroke="#9170b8" stroke-width="1.6"/><path d="M1617.88,832.60 L1622.02,834.00 L1626.15,835.00 L1630.29,832.60" fill="none" stroke="#9170b8" stroke-width="1.6"/><path d="M1402.87,831.00 L1407.00,832.00 L1411.13,833.00 L1415.27,831.00 L1419.40,836.00 L1423.54,832.00 L1427.67,831.00 L1431.81,831.00 L1435.94,830.50 L1440.08,830.50" fill="none" stroke="#ca8eae" stroke-width="1.6"/><path d="M1634.42,836.50 L1638.56,833.00 L1642.69,830.60" fill="none" stroke="#ca8eae" stroke-width="1.6"/><path d="M1398.73,750.10 L1402.87,749.83 L1407.00,749.56 L1411.13,749.29 L1415.27,749.02 L1419.40,748.75 L1423.54,748.48 L1427.67,748.21 L1431.81,747.94 L1435.94,747.67 L1440.08,747.40" fill="none" stroke="#d6bf57" stroke-width="1.6"/><path d="M1626.15,739.50 L1630.29,739.50" fill="none" stroke="#d6bf57" stroke-width="1.6"/><path d="M1402.87,769.00 L1407.00,769.50 L1411.13,770.00 L1415.27,770.00 L1419.40,770.20 L1423.54,770.40" fill="none" stroke="#b9a888" stroke-width="1.6"/><path d="M1634.42,796.70 L1638.56,784.20" fill="none" stroke="#b9a888" stroke-width="1.6"/><circle cx="1398.73" cy="831.00" r="2.9" fill="#fff" stroke="#6092c0" stroke-width="1.6"/><circle cx="1402.87" cy="831.00" r="2.9" fill="#fff" stroke="#6092c0" stroke-width="1.6"/><circle cx="1407.00" cy="831.00" r="2.9" fill="#fff" stroke="#6092c0" stroke-width="1.6"/><circle cx="1411.13" cy="831.00" r="2.9" fill="#fff" stroke="#6092c0" stroke-width="1.6"/><circle cx="1415.27" cy="831.00" r="2.9" fill="#fff" stroke="#6092c0" stroke-width="1.6"/><circle cx="1419.40" cy="831.00" r="2.9" fill="#fff" stroke="#6092c0" stroke-width="1.6"/><circle cx="1423.54" cy="831.00" r="2.9" fill="#fff" stroke="#6092c0" stroke-width="1.6"/><circle cx="1427.67" cy="831.00" r="2.9" fill="#fff" stroke="#6092c0" stroke-width="1.6"/><circle cx="1431.81" cy="831.00" r="2.9" fill="#fff" stroke="#6092c0" stroke-width="1.6"/><circle cx="1435.94" cy="831.00" r="2.9" fill="#fff" stroke="#6092c0" stroke-width="1.6"/><circle cx="1440.08" cy="831.00" r="2.9" fill="#fff" stroke="#6092c0" stroke-width="1.6"/><circle cx="1456.62" cy="830.20" r="2.9" fill="#fff" stroke="#6092c0" stroke-width="1.6"/><circle cx="1630.29" cy="829.00" r="2.9" fill="#fff" stroke="#6092c0" stroke-width="1.6"/><circle cx="1634.42" cy="829.00" r="2.9" fill="#fff" stroke="#6092c0" stroke-width="1.6"/><circle cx="1638.56" cy="829.00" r="2.9" fill="#fff" stroke="#6092c0" stroke-width="1.6"/><circle cx="1642.69" cy="829.00" r="2.9" fill="#fff" stroke="#6092c0" stroke-width="1.6"/><circle cx="1402.87" cy="788.20" r="2.9" fill="#fff" stroke="#54b399" stroke-width="1.6"/><circle cx="1407.00" cy="788.00" r="2.9" fill="#fff" stroke="#54b399" stroke-width="1.6"/><circle cx="1411.13" cy="787.60" r="2.9" fill="#fff" stroke="#54b399" stroke-width="1.6"/><circle cx="1415.27" cy="787.40" r="2.9" fill="#fff" stroke="#54b399" stroke-width="1.6"/><circle cx="1419.40" cy="786.80" r="2.9" fill="#fff" stroke="#54b399" stroke-width="1.6"/><circle cx="1423.54" cy="785.80" r="2.9" fill="#fff" stroke="#54b399" stroke-width="1.6"/><circle cx="1427.67" cy="791.10" r="2.9" fill="#fff" stroke="#54b399" stroke-width="1.6"/><circle cx="1431.81" cy="791.10" r="2.9" fill="#fff" stroke="#54b399" stroke-width="1.6"/><circle cx="1435.94" cy="781.90" r="2.9" fill="#fff" stroke="#54b399" stroke-width="1.6"/><circle cx="1440.08" cy="781.90" r="2.9" fill="#fff" stroke="#54b399" stroke-width="1.6"/><circle cx="1456.62" cy="760.60" r="2.9" fill="#fff" stroke="#54b399" stroke-width="1.6"/><circle cx="1402.87" cy="738.90" r="2.9" fill="#fff" stroke="#d36086" stroke-width="1.6"/><circle cx="1407.00" cy="739.23" r="2.9" fill="#fff" stroke="#d36086" stroke-width="1.6"/><circle cx="1411.13" cy="739.56" r="2.9" fill="#fff" stroke="#d36086" stroke-width="1.6"/><circle cx="1415.27" cy="739.89" r="2.9" fill="#fff" stroke="#d36086" stroke-width="1.6"/><circle cx="1419.40" cy="740.22" r="2.9" fill="#fff" stroke="#d36086" stroke-width="1.6"/><circle cx="1423.54" cy="740.55" r="2.9" fill="#fff" stroke="#d36086" stroke-width="1.6"/><circle cx="1427.67" cy="740.88" r="2.9" fill="#fff" stroke="#d36086" stroke-width="1.6"/><circle cx="1431.81" cy="741.21" r="2.9" fill="#fff" stroke="#d36086" stroke-width="1.6"/><circle cx="1435.94" cy="741.54" r="2.9" fill="#fff" stroke="#d36086" stroke-width="1.6"/><circle cx="1440.08" cy="741.87" r="2.9" fill="#fff" stroke="#d36086" stroke-width="1.6"/><circle cx="1444.21" cy="742.20" r="2.9" fill="#fff" stroke="#d36086" stroke-width="1.6"/><circle cx="1456.62" cy="742.40" r="2.9" fill="#fff" stroke="#d36086" stroke-width="1.6"/><circle cx="1630.29" cy="742.00" r="2.9" fill="#fff" stroke="#d36086" stroke-width="1.6"/><circle cx="1638.56" cy="739.80" r="2.9" fill="#fff" stroke="#d36086" stroke-width="1.6"/><circle cx="1402.87" cy="833.50" r="2.9" fill="#fff" stroke="#9170b8" stroke-width="1.6"/><circle cx="1407.00" cy="833.50" r="2.9" fill="#fff" stroke="#9170b8" stroke-width="1.6"/><circle cx="1411.13" cy="833.50" r="2.9" fill="#fff" stroke="#9170b8" stroke-width="1.6"/><circle cx="1415.27" cy="833.50" r="2.9" fill="#fff" stroke="#9170b8" stroke-width="1.6"/><circle cx="1419.40" cy="833.50" r="2.9" fill="#fff" stroke="#9170b8" stroke-width="1.6"/><circle cx="1423.54" cy="833.50" r="2.9" fill="#fff" stroke="#9170b8" stroke-width="1.6"/><circle cx="1427.67" cy="833.50" r="2.9" fill="#fff" stroke="#9170b8" stroke-width="1.6"/><circle cx="1431.81" cy="833.50" r="2.9" fill="#fff" stroke="#9170b8" stroke-width="1.6"/><circle cx="1435.94" cy="833.50" r="2.9" fill="#fff" stroke="#9170b8" stroke-width="1.6"/><circle cx="1440.08" cy="833.50" r="2.9" fill="#fff" stroke="#9170b8" stroke-width="1.6"/><circle cx="1448.35" cy="832.60" r="2.9" fill="#fff" stroke="#9170b8" stroke-width="1.6"/><circle cx="1617.88" cy="832.60" r="2.9" fill="#fff" stroke="#9170b8" stroke-width="1.6"/><circle cx="1622.02" cy="834.00" r="2.9" fill="#fff" stroke="#9170b8" stroke-width="1.6"/><circle cx="1626.15" cy="835.00" r="2.9" fill="#fff" stroke="#9170b8" stroke-width="1.6"/><circle cx="1630.29" cy="832.60" r="2.9" fill="#fff" stroke="#9170b8" stroke-width="1.6"/><circle cx="1402.87" cy="831.00" r="2.9" fill="#fff" stroke="#ca8eae" stroke-width="1.6"/><circle cx="1407.00" cy="832.00" r="2.9" fill="#fff" stroke="#ca8eae" stroke-width="1.6"/><circle cx="1411.13" cy="833.00" r="2.9" fill="#fff" stroke="#ca8eae" stroke-width="1.6"/><circle cx="1415.27" cy="831.00" r="2.9" fill="#fff" stroke="#ca8eae" stroke-width="1.6"/><circle cx="1419.40" cy="836.00" r="2.9" fill="#fff" stroke="#ca8eae" stroke-width="1.6"/><circle cx="1423.54" cy="832.00" r="2.9" fill="#fff" stroke="#ca8eae" stroke-width="1.6"/><circle cx="1427.67" cy="831.00" r="2.9" fill="#fff" stroke="#ca8eae" stroke-width="1.6"/><circle cx="1431.81" cy="831.00" r="2.9" fill="#fff" stroke="#ca8eae" stroke-width="1.6"/><circle cx="1435.94" cy="830.50" r="2.9" fill="#fff" stroke="#ca8eae" stroke-width="1.6"/><circle cx="1440.08" cy="830.50" r="2.9" fill="#fff" stroke="#ca8eae" stroke-width="1.6"/><circle cx="1456.62" cy="836.90" r="2.9" fill="#fff" stroke="#ca8eae" stroke-width="1.6"/><circle cx="1634.42" cy="836.50" r="2.9" fill="#fff" stroke="#ca8eae" stroke-width="1.6"/><circle cx="1638.56" cy="833.00" r="2.9" fill="#fff" stroke="#ca8eae" stroke-width="1.6"/><circle cx="1642.69" cy="830.60" r="2.9" fill="#fff" stroke="#ca8eae" stroke-width="1.6"/><circle cx="1398.73" cy="750.10" r="2.9" fill="#fff" stroke="#d6bf57" stroke-width="1.6"/><circle cx="1402.87" cy="749.83" r="2.9" fill="#fff" stroke="#d6bf57" stroke-width="1.6"/><circle cx="1407.00" cy="749.56" r="2.9" fill="#fff" stroke="#d6bf57" stroke-width="1.6"/><circle cx="1411.13" cy="749.29" r="2.9" fill="#fff" stroke="#d6bf57" stroke-width="1.6"/><circle cx="1415.27" cy="749.02" r="2.9" fill="#fff" stroke="#d6bf57" stroke-width="1.6"/><circle cx="1419.40" cy="748.75" r="2.9" fill="#fff" stroke="#d6bf57" stroke-width="1.6"/><circle cx="1423.54" cy="748.48" r="2.9" fill="#fff" stroke="#d6bf57" stroke-width="1.6"/><circle cx="1427.67" cy="748.21" r="2.9" fill="#fff" stroke="#d6bf57" stroke-width="1.6"/><circle cx="1431.81" cy="747.94" r="2.9" fill="#fff" stroke="#d6bf57" stroke-width="1.6"/><circle cx="1435.94" cy="747.67" r="2.9" fill="#fff" stroke="#d6bf57" stroke-width="1.6"/><circle cx="1440.08" cy="747.40" r="2.9" fill="#fff" stroke="#d6bf57" stroke-width="1.6"/><circle cx="1626.15" cy="739.50" r="2.9" fill="#fff" stroke="#d6bf57" stroke-width="1.6"/><circle cx="1630.29" cy="739.50" r="2.9" fill="#fff" stroke="#d6bf57" stroke-width="1.6"/><circle cx="1402.87" cy="769.00" r="2.9" fill="#fff" stroke="#b9a888" stroke-width="1.6"/><circle cx="1407.00" cy="769.50" r="2.9" fill="#fff" stroke="#b9a888" stroke-width="1.6"/><circle cx="1411.13" cy="770.00" r="2.9" fill="#fff" stroke="#b9a888" stroke-width="1.6"/><circle cx="1415.27" cy="770.00" r="2.9" fill="#fff" stroke="#b9a888" stroke-width="1.6"/><circle cx="1419.40" cy="770.20" r="2.9" fill="#fff" stroke="#b9a888" stroke-width="1.6"/><circle cx="1423.54" cy="770.40" r="2.9" fill="#fff" stroke="#b9a888" stroke-width="1.6"/><circle cx="1634.42" cy="796.70" r="2.9" fill="#fff" stroke="#b9a888" stroke-width="1.6"/><circle cx="1638.56" cy="784.20" r="2.9" fill="#fff" stroke="#b9a888" stroke-width="1.6"/>
<circle cx="454.2" cy="747.70" r="4.1" fill="#6092c0"/><circle cx="454.2" cy="770.85" r="4.1" fill="#54b399"/><circle cx="454.2" cy="794.00" r="4.1" fill="#d36086"/><circle cx="454.2" cy="817.15" r="4.1" fill="#9170b8"/><circle cx="454.2" cy="840.30" r="4.1" fill="#ca8eae"/><circle cx="454.2" cy="863.45" r="4.1" fill="#d6bf57"/><circle cx="454.2" cy="886.60" r="4.1" fill="#b9a888"/><circle cx="1086" cy="747.70" r="4.1" fill="#6092c0"/><circle cx="1086" cy="770.85" r="4.1" fill="#54b399"/><circle cx="1086" cy="794.00" r="4.1" fill="#d36086"/><circle cx="1086" cy="817.15" r="4.1" fill="#9170b8"/><circle cx="1086" cy="840.30" r="4.1" fill="#ca8eae"/><circle cx="1086" cy="863.45" r="4.1" fill="#d6bf57"/><circle cx="1086" cy="886.60" r="4.1" fill="#b9a888"/><circle cx="1677.8" cy="747.70" r="4.1" fill="#6092c0"/><circle cx="1677.8" cy="770.85" r="4.1" fill="#54b399"/><circle cx="1677.8" cy="794.00" r="4.1" fill="#d36086"/><circle cx="1677.8" cy="817.15" r="4.1" fill="#9170b8"/><circle cx="1677.8" cy="840.30" r="4.1" fill="#ca8eae"/><circle cx="1677.8" cy="863.45" r="4.1" fill="#d6bf57"/><circle cx="1677.8" cy="886.60" r="4.1" fill="#b9a888"/>

    <!-- hamburger -->
    <g stroke="#1d2a3a" stroke-width="2" stroke-linecap="round">
      <line x1="17" y1="72.5" x2="32" y2="72.5"/><line x1="17" y1="77.8" x2="32" y2="77.8"/><line x1="17" y1="83" x2="32" y2="83"/>
    </g>
    <!-- home -->
    <path d="M67.6,84.2 V75.8 L74,70.9 L80.2,75.8 V84.2 Z" fill="none" stroke="#343741" stroke-width="1.3" stroke-linejoin="round"/>
    <!-- save icon -->
    <g fill="none" stroke="#0f7d7d" stroke-width="1.3" stroke-linejoin="round">
      <path d="M19.2,128.4 h10.9 l3,3 v10.4 h-13.9 z"/>
      <path d="M23.4,128.4 v3.8 h5.2 v-3.8"/>
      <circle cx="26" cy="137.3" r="1.7"/>
    </g>
    <path d="M41,132.6 l6,5.6 l6,-5.6" fill="none" stroke="#0f7d7d" stroke-width="1.3"/>
    <!-- filter icon -->
    <circle cx="20" cy="175.4" r="7.8" fill="none" stroke="#0f7d7d" stroke-width="1.3"/>
    <g stroke="#0f7d7d" stroke-width="1.6" stroke-opacity=".8">
      <line x1="15.2" y1="172.9" x2="24.8" y2="172.9"/><line x1="17.2" y1="176.1" x2="22.9" y2="176.1"/>
    </g>
    <rect x="19" y="178.3" width="2" height="1.8" fill="#0f7d7d" fill-opacity=".8"/>
    <line x1="35" y1="175.4" x2="44.8" y2="175.4" stroke="#d3d6db" stroke-width="1.2"/>
    <!-- calendar -->
    <g fill="none" stroke="#0f7d7d" stroke-width="1.25">
      <rect x="1275" y="128.6" width="13.2" height="13.3" rx="1.8"/>
      <line x1="1275" y1="131.4" x2="1288.2" y2="131.4"/>
      <line x1="1278.5" y1="126.8" x2="1278.5" y2="129.6"/><line x1="1284" y1="126.8" x2="1284" y2="129.6"/>
    </g>
    <g fill="#0f7d7d">
      <rect x="1277.3" y="133.8" width="1.9" height="1.3" rx=".5"/><rect x="1280.5" y="133.8" width="1.9" height="1.3" rx=".5"/><rect x="1283.7" y="133.8" width="1.9" height="1.3" rx=".5"/>
      <rect x="1277.3" y="135.9" width="1.9" height="1.3" rx=".5"/><rect x="1280.5" y="135.9" width="1.9" height="1.3" rx=".5"/><rect x="1283.7" y="135.9" width="1.9" height="1.3" rx=".5"/>
      <rect x="1277.3" y="138" width="1.9" height="1.3" rx=".5" opacity=".75"/><rect x="1280.5" y="138" width="1.9" height="1.3" rx=".5" opacity=".75"/><rect x="1283.7" y="138" width="1.9" height="1.3" rx=".5" opacity=".75"/>
    </g>
    <path d="M1298.2,131.4 l4.5,4.2 l4.5,-4.2" fill="none" stroke="#0f7d7d" stroke-width="1.2"/>
    <!-- arrow -->
    <g fill="none" stroke="#69707d" stroke-width="1.1">
      <line x1="1567" y1="135.3" x2="1576" y2="135.3"/><path d="M1572,131.3 l4,4 l-4,4"/>
    </g>
    <!-- refresh icon -->
    <g fill="none" stroke="#fff" stroke-width="1.3" stroke-opacity=".92">
      <path d="M1799.8,127.9 A6.2,6.2 0 1 0 1802.9,133.3"/>
      <path d="M1802.6,126.2 V130.5 H1798.1"/>
    </g>
    <!-- pencil -->
    <g fill="none" stroke="#0f7d7d" stroke-width="1.25" stroke-linejoin="round">
      <path d="M1704.9,80.7 L1715.1,70.5 L1719,74.4 L1709.3,84.5 Z"/>
      <line x1="1708.4" y1="81.1" x2="1716.1" y2="73.4"/>
    </g>
    <path d="M1704.3,80.3 L1704.6,85.3 L1709.7,84.9 Z" fill="#0f7d7d"/>
    <!-- help -->
    <circle cx="1875.6" cy="77.6" r="6.3" fill="none" stroke="#2b3744" stroke-width="1.35"/>
    <path d="M1873.5,76.1 a2.1,2.1 0 1 1 3.2,1.7 c-0.8,0.5 -1.1,0.8 -1.1,1.6" fill="none" stroke="#2b3744" stroke-width="1.2"/>
    <circle cx="1875.6" cy="81.1" r="0.75" fill="#2b3744"/>
    <!-- logo mark -->
    <g>
      <path d="M17.2,14.8 C21.8,14.2 26.6,17.6 27,23 C27.2,25 27,26.6 26.6,27.6 C25.6,24.6 23.6,23 20.6,22 C17.6,21 15.6,19.6 15.8,17.2 C15.9,15.8 16.4,15 17.2,14.8 Z" fill="#c3dfee"/>
      <path d="M10.4,20.2 C9.4,25.4 12.2,31.6 17,32.8 C20,33.6 22.4,31.6 21.8,29.4 C21.2,27.2 18.6,26.4 16,25.4 C13.6,24.4 11.6,22.8 10.4,20.2 Z" fill="#00a9e5"/>
      <path d="M18.1,36.1 C24.5,36.4 31,31 31.5,23.1" fill="none" stroke="#00a9e5" stroke-width="1.7" stroke-linecap="round"/>
    </g>
    <!-- panel menu -->
    <path d="M1866.1,209.4 H1887.3 a4,4 0 0 1 4,4 V235.3 H1870.1 a4,4 0 0 1 -4,-4 Z" fill="#e8e9ec"/>
    <g fill="none" stroke="#2b3542" stroke-width="1.4">
      <rect x="1870.8" y="221.4" width="3.1" height="3.1"/><rect x="1877.1" y="221.4" width="3.1" height="3.1"/><rect x="1883.4" y="221.4" width="3.1" height="3.1"/>
    </g>
    
<path d="M579.00,351.10 L612.84,351.10 L612.84,341.32 L602.96,341.32 L602.96,297.80 L593.47,297.80 C589.48,299.60 584.99,301.59 580.80,302.59 L580.80,310.28 L590.58,310.28 L590.58,341.32 L579.00,341.32 Z" fill="#209280"/><path d="M83.00,587.30 L116.90,587.30 L116.90,577.50 L107.00,577.50 L107.00,533.90 L97.50,533.90 C93.50,535.70 89.00,537.70 84.80,538.70 L84.80,546.40 L94.60,546.40 L94.60,577.50 L83.00,577.50 Z" fill="#293846"/><path d="M601.40,587.30 L635.30,587.30 L635.30,577.50 L625.40,577.50 L625.40,533.90 L615.90,533.90 C611.90,535.70 607.40,537.70 603.20,538.70 L603.20,546.40 L613.00,546.40 L613.00,577.50 L601.40,577.50 Z" fill="#293846"/><path d="M1544.50,352.90 L1569.32,352.90 L1569.32,345.72 L1562.07,345.72 L1562.07,313.80 L1555.12,313.80 C1552.19,315.12 1548.89,316.58 1545.82,317.31 L1545.82,322.95 L1552.99,322.95 L1552.99,345.72 L1544.50,345.72 Z" fill="#9170b8"/><path d="M1577.00,352.90 L1601.82,352.90 L1601.82,345.72 L1594.57,345.72 L1594.57,313.80 L1587.62,313.80 C1584.69,315.12 1581.39,316.58 1578.32,317.31 L1578.32,322.95 L1585.49,322.95 L1585.49,345.72 L1577.00,345.72 Z" fill="#9170b8"/><circle cx="1170.65" cy="347.95" r="5.75" fill="#9170b8"/><circle cx="1647.25" cy="347.6" r="5.65" fill="#9170b8"/><circle cx="1153.7" cy="583.55" r="5.8" fill="#d36086"/><text x="35.20" y="32.50" font-size="26.14" font-weight="bold" fill="#e6e6e6" textLength="207.82" lengthAdjust="spacingAndGlyphs"><tspan fill="#00a3e0">Open</tspan><tspan fill="#b9d9eb">Search</tspan><tspan fill="#e4e4e4"> Dashboards</tspan></text>
<text x="133.57" y="83.50" font-size="16.52" font-weight="normal" fill="#545b67" textLength="82.97" lengthAdjust="spacingAndGlyphs">Dashboards</text>
<text x="265.79" y="83.50" font-size="16.52" font-weight="normal" fill="#343a45" textLength="158.73" lengthAdjust="spacingAndGlyphs">K8S Cluster Dashboard</text>
<text x="1352.98" y="83.50" font-size="16.09" font-weight="normal" fill="#0f7d7d" textLength="74.45" lengthAdjust="spacingAndGlyphs">Full screen</text>
<text x="1453.93" y="83.50" font-size="16.09" font-weight="normal" fill="#0f7d7d" textLength="39.99" lengthAdjust="spacingAndGlyphs">Share</text>
<text x="1519.41" y="83.50" font-size="16.09" font-weight="normal" fill="#0f7d7d" textLength="41.45" lengthAdjust="spacingAndGlyphs">Clone</text>
<text x="1586.00" y="83.50" font-size="16.09" font-weight="normal" fill="#0f7d7d" textLength="70.60" lengthAdjust="spacingAndGlyphs">Reporting</text>
<text x="1728.12" y="83.90" font-size="18.26" font-weight="normal" fill="#0f7d7d" textLength="31.83" lengthAdjust="spacingAndGlyphs" stroke="#0f7d7d" stroke-width="0.40">Edit</text>
<text x="1821.29" y="83.00" font-size="14.63" font-weight="bold" fill="#111111" textLength="6.80" lengthAdjust="spacingAndGlyphs">a</text>
<text x="71.22" y="138.50" font-size="16.81" font-weight="normal" fill="#69707d" textLength="47.90" lengthAdjust="spacingAndGlyphs">Search</text>
<text x="1215.65" y="139.10" font-size="15.94" font-weight="normal" fill="#0f7d7d" textLength="29.49" lengthAdjust="spacingAndGlyphs">DQL</text>
<text x="1463.99" y="139.10" font-size="16.71" font-weight="normal" fill="#1d2a3a" textLength="94.33" lengthAdjust="spacingAndGlyphs">~ an hour ago</text>
<text x="1584.84" y="139.10" font-size="16.11" font-weight="normal" fill="#1d2a3a" textLength="30.02" lengthAdjust="spacingAndGlyphs">now</text>
<text x="1813.33" y="139.80" font-size="20.29" font-weight="normal" fill="#ffffff" textLength="60.02" lengthAdjust="spacingAndGlyphs" stroke="#ffffff" stroke-width="0.45">Refresh</text>
<text x="53.50" y="181.00" font-size="16.52" font-weight="normal" fill="#0f7d7d" textLength="75.31" lengthAdjust="spacingAndGlyphs" stroke="#0f7d7d" stroke-width="0.36">+ Add filter</text>
<text x="16.35" y="226.75" font-size="14.14" font-weight="bold" fill="#0f1924" textLength="102.34" lengthAdjust="spacingAndGlyphs">[K8S] Total Node</text>
<text x="252.79" y="226.75" font-size="14.14" font-weight="bold" fill="#0f1924" textLength="132.86" lengthAdjust="spacingAndGlyphs">[K8S] NotReady Node</text>
<text x="489.79" y="226.75" font-size="14.14" font-weight="bold" fill="#0f1924" textLength="114.36" lengthAdjust="spacingAndGlyphs">[K8S] Master Node</text>
<text x="726.79" y="226.75" font-size="14.14" font-weight="bold" fill="#0f1924" textLength="117.36" lengthAdjust="spacingAndGlyphs">[K8S] Worker Node</text>
<text x="962.55" y="226.75" font-size="14.14" font-weight="bold" fill="#0f1924" textLength="263.59" lengthAdjust="spacingAndGlyphs">[K8S] Cluster Filessystem Usage / Available</text>
<text x="15.79" y="462.75" font-size="14.14" font-weight="bold" fill="#0f1924" textLength="141.60" lengthAdjust="spacingAndGlyphs">[K8S] Total Namespace</text>
<text x="253.05" y="462.75" font-size="14.14" font-weight="bold" fill="#0f1924" textLength="94.04" lengthAdjust="spacingAndGlyphs">[K8S] Total Pod</text>
<text x="489.69" y="462.75" font-size="14.14" font-weight="bold" fill="#0f1924" textLength="131.29" lengthAdjust="spacingAndGlyphs">[K8S] Total Container</text>
<text x="727.19" y="462.75" font-size="14.14" font-weight="bold" fill="#0f1924" textLength="145.42" lengthAdjust="spacingAndGlyphs">[K8S] Total Deployment</text>
<text x="962.60" y="462.75" font-size="14.14" font-weight="bold" fill="#0f1924" textLength="242.00" lengthAdjust="spacingAndGlyphs">[K8S] Cluster Memory Usage / Available</text>
<text x="15.81" y="698.75" font-size="14.14" font-weight="bold" fill="#0f1924" textLength="138.58" lengthAdjust="spacingAndGlyphs">[K8S] Node CPU Usage</text>
<text x="686.40" y="698.75" font-size="14.14" font-weight="bold" fill="#0f1924" textLength="179.60" lengthAdjust="spacingAndGlyphs">[K8S] Node Filesystem Usage</text>
<text x="1318.50" y="698.75" font-size="14.14" font-weight="bold" fill="#0f1924" textLength="163.40" lengthAdjust="spacingAndGlyphs">[K8S] Node Memory Usage</text>
<text x="15.79" y="1021.70" font-size="14.14" font-weight="bold" fill="#0f1924" textLength="108.75" lengthAdjust="spacingAndGlyphs">[K8S] Cluster Top</text>
<text x="963.07" y="1021.70" font-size="14.14" font-weight="bold" fill="#0f1924" textLength="165.31" lengthAdjust="spacingAndGlyphs">[Pod] Resource Metric Table</text>
<text x="99.28" y="351.25" font-size="77.57" font-weight="bold" fill="#6092c0" textLength="44.78" lengthAdjust="spacingAndGlyphs">7</text>
<text x="335.47" y="351.25" font-size="77.57" font-weight="bold" fill="#bd271e" textLength="45.06" lengthAdjust="spacingAndGlyphs">2</text>
<text x="809.64" y="351.25" font-size="77.57" font-weight="bold" fill="#209280" textLength="45.52" lengthAdjust="spacingAndGlyphs">6</text>
<text x="122.16" y="587.40" font-size="77.57" font-weight="bold" fill="#293846" textLength="43.67" lengthAdjust="spacingAndGlyphs">7</text>
<text x="314.62" y="587.50" font-size="77.57" font-weight="bold" fill="#293846" textLength="88.25" lengthAdjust="spacingAndGlyphs">80</text>
<text x="550.37" y="587.60" font-size="77.57" font-weight="bold" fill="#293846" textLength="43.27" lengthAdjust="spacingAndGlyphs">5</text>
<text x="788.31" y="587.50" font-size="77.57" font-weight="bold" fill="#293846" textLength="88.57" lengthAdjust="spacingAndGlyphs">39</text>
<text x="79.14" y="398.00" font-size="18.70" font-weight="normal" fill="#1f2d3d" textLength="85.34" lengthAdjust="spacingAndGlyphs">Total Node</text>
<text x="295.79" y="398.00" font-size="18.70" font-weight="normal" fill="#1f2d3d" textLength="125.03" lengthAdjust="spacingAndGlyphs">NotReady Node</text>
<text x="544.79" y="398.00" font-size="18.70" font-weight="normal" fill="#1f2d3d" textLength="100.94" lengthAdjust="spacingAndGlyphs">Master Node</text>
<text x="780.60" y="398.00" font-size="18.70" font-weight="normal" fill="#1f2d3d" textLength="103.42" lengthAdjust="spacingAndGlyphs">Worker Node</text>
<text x="54.15" y="634.50" font-size="18.70" font-weight="normal" fill="#1f2d3d" textLength="135.32" lengthAdjust="spacingAndGlyphs">Total Namespace</text>
<text x="321.39" y="634.50" font-size="18.70" font-weight="normal" fill="#1f2d3d" textLength="74.19" lengthAdjust="spacingAndGlyphs">Total Pod</text>
<text x="535.14" y="634.50" font-size="18.70" font-weight="normal" fill="#1f2d3d" textLength="120.89" lengthAdjust="spacingAndGlyphs">Total Container</text>
<text x="762.74" y="634.50" font-size="18.70" font-weight="normal" fill="#1f2d3d" textLength="139.51" lengthAdjust="spacingAndGlyphs">Total Deployment</text>
<text x="1033.91" y="290.40" font-size="29.57" font-weight="normal" fill="#91979f" textLength="317.24" lengthAdjust="spacingAndGlyphs">Cluster Filesystem Usage</text>
<text x="1474.83" y="290.40" font-size="29.57" font-weight="normal" fill="#91979f" textLength="355.84" lengthAdjust="spacingAndGlyphs">Cluster Filesystem Available</text>
<text x="1047.59" y="526.40" font-size="29.57" font-weight="normal" fill="#91979f" textLength="288.37" lengthAdjust="spacingAndGlyphs">Cluster Memory Usage</text>
<text x="1489.77" y="526.40" font-size="29.57" font-weight="normal" fill="#91979f" textLength="325.91" lengthAdjust="spacingAndGlyphs">Cluster Memory Available</text>
<text x="1096.73" y="353.50" font-size="56.57" font-weight="bold" fill="#9170b8" textLength="64.26" lengthAdjust="spacingAndGlyphs">69</text>
<text x="1179.80" y="353.20" font-size="56.57" font-weight="bold" fill="#9170b8" textLength="109.34" lengthAdjust="spacingAndGlyphs">4GB</text>
<text x="1605.53" y="352.90" font-size="56.57" font-weight="bold" fill="#9170b8" textLength="31.95" lengthAdjust="spacingAndGlyphs">2</text>
<text x="1656.92" y="352.90" font-size="56.57" font-weight="bold" fill="#9170b8" textLength="108.20" lengthAdjust="spacingAndGlyphs">2GB</text>
<text x="1112.07" y="589.00" font-size="56.57" font-weight="bold" fill="#d36086" textLength="32.43" lengthAdjust="spacingAndGlyphs">7</text>
<text x="1163.14" y="589.20" font-size="56.57" font-weight="bold" fill="#d36086" textLength="109.41" lengthAdjust="spacingAndGlyphs">3GB</text>
<text x="1597.17" y="589.40" font-size="56.57" font-weight="bold" fill="#d36086" textLength="111.62" lengthAdjust="spacingAndGlyphs">2GB</text>
<text x="1108.57" y="385.20" font-size="14.66" font-weight="normal" fill="#535966" textLength="168.27" lengthAdjust="spacingAndGlyphs">k8s.node.filesystem.usage</text>
<text x="1557.81" y="385.20" font-size="14.66" font-weight="normal" fill="#535966" textLength="189.04" lengthAdjust="spacingAndGlyphs">k8s.node.filesystem.available</text>
<text x="1113.05" y="621.20" font-size="14.66" font-weight="normal" fill="#535966" textLength="158.24" lengthAdjust="spacingAndGlyphs">k8s.node.memory.usage</text>
<text x="1563.64" y="621.20" font-size="14.66" font-weight="normal" fill="#535966" textLength="177.96" lengthAdjust="spacingAndGlyphs">k8s.node.memory.available</text>
<text x="466.82" y="752.40" font-size="13.70" font-weight="normal" fill="#2c3846" textLength="135.90" lengthAdjust="spacingAndGlyphs">hsg-apm-stage.work…</text>
<text x="466.82" y="775.55" font-size="13.70" font-weight="normal" fill="#2c3846" textLength="144.50" lengthAdjust="spacingAndGlyphs">hsg-apm-stage.option11</text>
<text x="466.84" y="798.70" font-size="13.70" font-weight="normal" fill="#2c3846" textLength="146.91" lengthAdjust="spacingAndGlyphs">hsg-apm-stage.worker03</text>
<text x="466.84" y="821.85" font-size="13.70" font-weight="normal" fill="#2c3846" textLength="146.46" lengthAdjust="spacingAndGlyphs">hsg-apm-stage.master01</text>
<text x="466.82" y="845.00" font-size="13.70" font-weight="normal" fill="#2c3846" textLength="128.79" lengthAdjust="spacingAndGlyphs">hsg-apm-stage.wor…</text>
<text x="466.83" y="868.15" font-size="13.70" font-weight="normal" fill="#2c3846" textLength="144.66" lengthAdjust="spacingAndGlyphs">hsg-apm-stage.option10</text>
<text x="466.83" y="891.30" font-size="13.70" font-weight="normal" fill="#2c3846" textLength="144.79" lengthAdjust="spacingAndGlyphs">hsg-apm-stage.option12</text>
<text x="608.31" y="752.40" font-size="14.29" font-weight="normal" fill="#2c3846" textLength="44.13" lengthAdjust="spacingAndGlyphs">9.648%</text>
<text x="601.11" y="845.00" font-size="14.29" font-weight="normal" fill="#2c3846" textLength="51.33" lengthAdjust="spacingAndGlyphs">98.239%</text>
<text x="1098.42" y="752.40" font-size="13.70" font-weight="normal" fill="#2c3846" textLength="136.21" lengthAdjust="spacingAndGlyphs">hsg-apm-stage.work…</text>
<text x="1098.42" y="775.55" font-size="13.70" font-weight="normal" fill="#2c3846" textLength="144.50" lengthAdjust="spacingAndGlyphs">hsg-apm-stage.option11</text>
<text x="1098.44" y="798.70" font-size="13.70" font-weight="normal" fill="#2c3846" textLength="146.91" lengthAdjust="spacingAndGlyphs">hsg-apm-stage.worker03</text>
<text x="1098.44" y="821.85" font-size="13.70" font-weight="normal" fill="#2c3846" textLength="146.46" lengthAdjust="spacingAndGlyphs">hsg-apm-stage.master01</text>
<text x="1098.42" y="845.00" font-size="13.70" font-weight="normal" fill="#2c3846" textLength="136.21" lengthAdjust="spacingAndGlyphs">hsg-apm-stage.work…</text>
<text x="1098.43" y="868.15" font-size="13.70" font-weight="normal" fill="#2c3846" textLength="144.66" lengthAdjust="spacingAndGlyphs">hsg-apm-stage.option10</text>
<text x="1098.43" y="891.30" font-size="13.70" font-weight="normal" fill="#2c3846" textLength="144.79" lengthAdjust="spacingAndGlyphs">hsg-apm-stage.option12</text>
<text x="1242.16" y="752.40" font-size="14.29" font-weight="normal" fill="#2c3846" textLength="42.18" lengthAdjust="spacingAndGlyphs">31.3GB</text>
<text x="1242.16" y="845.00" font-size="14.29" font-weight="normal" fill="#2c3846" textLength="42.18" lengthAdjust="spacingAndGlyphs">38.1GB</text>
<text x="1690.62" y="752.40" font-size="13.70" font-weight="normal" fill="#2c3846" textLength="148.11" lengthAdjust="spacingAndGlyphs">hsg-apm-stage.worker…</text>
<text x="1690.62" y="775.55" font-size="13.70" font-weight="normal" fill="#2c3846" textLength="144.50" lengthAdjust="spacingAndGlyphs">hsg-apm-stage.option11</text>
<text x="1690.64" y="798.70" font-size="13.70" font-weight="normal" fill="#2c3846" textLength="146.91" lengthAdjust="spacingAndGlyphs">hsg-apm-stage.worker03</text>
<text x="1690.64" y="821.85" font-size="13.70" font-weight="normal" fill="#2c3846" textLength="146.46" lengthAdjust="spacingAndGlyphs">hsg-apm-stage.master01</text>
<text x="1690.62" y="845.00" font-size="13.70" font-weight="normal" fill="#2c3846" textLength="148.11" lengthAdjust="spacingAndGlyphs">hsg-apm-stage.worker…</text>
<text x="1690.63" y="868.15" font-size="13.70" font-weight="normal" fill="#2c3846" textLength="144.66" lengthAdjust="spacingAndGlyphs">hsg-apm-stage.option10</text>
<text x="1690.63" y="891.30" font-size="13.70" font-weight="normal" fill="#2c3846" textLength="144.79" lengthAdjust="spacingAndGlyphs">hsg-apm-stage.option12</text>
<text x="1840.76" y="752.40" font-size="14.29" font-weight="normal" fill="#2c3846" textLength="35.39" lengthAdjust="spacingAndGlyphs">3.7GB</text>
<text x="1840.76" y="845.00" font-size="14.29" font-weight="normal" fill="#2c3846" textLength="35.39" lengthAdjust="spacingAndGlyphs">3.7GB</text>
<text x="47.13" y="919.20" font-size="11.00" font-weight="normal" fill="#6b6f76" textLength="15.44" lengthAdjust="spacingAndGlyphs">0%</text>
<text x="42.19" y="899.73" font-size="11.00" font-weight="normal" fill="#6b6f76" textLength="20.36" lengthAdjust="spacingAndGlyphs">20%</text>
<text x="42.50" y="880.26" font-size="11.00" font-weight="normal" fill="#6b6f76" textLength="20.04" lengthAdjust="spacingAndGlyphs">40%</text>
<text x="42.19" y="860.79" font-size="11.00" font-weight="normal" fill="#6b6f76" textLength="20.36" lengthAdjust="spacingAndGlyphs">60%</text>
<text x="42.30" y="841.32" font-size="11.00" font-weight="normal" fill="#6b6f76" textLength="20.25" lengthAdjust="spacingAndGlyphs">80%</text>
<text x="36.43" y="821.85" font-size="11.00" font-weight="normal" fill="#6b6f76" textLength="26.11" lengthAdjust="spacingAndGlyphs">100%</text>
<text x="36.43" y="802.38" font-size="11.00" font-weight="normal" fill="#6b6f76" textLength="26.11" lengthAdjust="spacingAndGlyphs">120%</text>
<text x="36.43" y="782.91" font-size="11.00" font-weight="normal" fill="#6b6f76" textLength="26.11" lengthAdjust="spacingAndGlyphs">140%</text>
<text x="36.43" y="763.44" font-size="11.00" font-weight="normal" fill="#6b6f76" textLength="26.11" lengthAdjust="spacingAndGlyphs">160%</text>
<text x="36.43" y="743.97" font-size="11.00" font-weight="normal" fill="#6b6f76" textLength="26.11" lengthAdjust="spacingAndGlyphs">180%</text>
<text x="82.36" y="945.60" font-size="10.71" font-weight="normal" fill="#6b6f76" textLength="24.70" lengthAdjust="spacingAndGlyphs">15:00</text>
<text x="110.73" y="945.60" font-size="10.71" font-weight="normal" fill="#6b6f76" textLength="24.75" lengthAdjust="spacingAndGlyphs">15:05</text>
<text x="139.11" y="945.60" font-size="10.71" font-weight="normal" fill="#6b6f76" textLength="24.70" lengthAdjust="spacingAndGlyphs">15:10</text>
<text x="167.48" y="945.60" font-size="10.71" font-weight="normal" fill="#6b6f76" textLength="24.75" lengthAdjust="spacingAndGlyphs">15:15</text>
<text x="195.85" y="945.60" font-size="10.71" font-weight="normal" fill="#6b6f76" textLength="24.70" lengthAdjust="spacingAndGlyphs">15:20</text>
<text x="224.22" y="945.60" font-size="10.71" font-weight="normal" fill="#6b6f76" textLength="24.75" lengthAdjust="spacingAndGlyphs">15:25</text>
<text x="252.60" y="945.60" font-size="10.71" font-weight="normal" fill="#6b6f76" textLength="24.70" lengthAdjust="spacingAndGlyphs">15:30</text>
<text x="280.97" y="945.60" font-size="10.71" font-weight="normal" fill="#6b6f76" textLength="24.75" lengthAdjust="spacingAndGlyphs">15:35</text>
<text x="309.34" y="945.60" font-size="10.71" font-weight="normal" fill="#6b6f76" textLength="24.70" lengthAdjust="spacingAndGlyphs">15:40</text>
<text x="337.71" y="945.60" font-size="10.71" font-weight="normal" fill="#6b6f76" textLength="24.75" lengthAdjust="spacingAndGlyphs">15:45</text>
<text x="366.09" y="945.60" font-size="10.71" font-weight="normal" fill="#6b6f76" textLength="24.70" lengthAdjust="spacingAndGlyphs">15:50</text>
<text x="394.46" y="945.60" font-size="10.71" font-weight="normal" fill="#6b6f76" textLength="24.75" lengthAdjust="spacingAndGlyphs">15:55</text>
<text x="207.12" y="965.50" font-size="12.00" font-weight="bold" fill="#343741" textLength="87.21" lengthAdjust="spacingAndGlyphs">per 60 seconds</text>
<text x="726.53" y="919.20" font-size="11.00" font-weight="normal" fill="#6b6f76" textLength="13.03" lengthAdjust="spacingAndGlyphs">0B</text>
<text x="709.29" y="900.82" font-size="11.00" font-weight="normal" fill="#6b6f76" textLength="30.27" lengthAdjust="spacingAndGlyphs">4.7GB</text>
<text x="709.02" y="882.44" font-size="11.00" font-weight="normal" fill="#6b6f76" textLength="30.55" lengthAdjust="spacingAndGlyphs">9.3GB</text>
<text x="715.81" y="864.06" font-size="11.00" font-weight="normal" fill="#6b6f76" textLength="23.68" lengthAdjust="spacingAndGlyphs">14GB</text>
<text x="708.82" y="845.68" font-size="11.00" font-weight="normal" fill="#6b6f76" textLength="30.65" lengthAdjust="spacingAndGlyphs">18.6GB</text>
<text x="709.05" y="827.30" font-size="11.00" font-weight="normal" fill="#6b6f76" textLength="30.41" lengthAdjust="spacingAndGlyphs">23.3GB</text>
<text x="709.05" y="808.92" font-size="11.00" font-weight="normal" fill="#6b6f76" textLength="30.41" lengthAdjust="spacingAndGlyphs">27.9GB</text>
<text x="709.19" y="790.54" font-size="11.00" font-weight="normal" fill="#6b6f76" textLength="30.28" lengthAdjust="spacingAndGlyphs">32.6GB</text>
<text x="709.19" y="772.16" font-size="11.00" font-weight="normal" fill="#6b6f76" textLength="30.28" lengthAdjust="spacingAndGlyphs">37.3GB</text>
<text x="709.32" y="753.78" font-size="11.00" font-weight="normal" fill="#6b6f76" textLength="30.14" lengthAdjust="spacingAndGlyphs">41.9GB</text>
<text x="757.96" y="945.60" font-size="10.71" font-weight="normal" fill="#6b6f76" textLength="24.70" lengthAdjust="spacingAndGlyphs">15:00</text>
<text x="807.06" y="945.60" font-size="10.71" font-weight="normal" fill="#6b6f76" textLength="24.70" lengthAdjust="spacingAndGlyphs">15:10</text>
<text x="856.16" y="945.60" font-size="10.71" font-weight="normal" fill="#6b6f76" textLength="24.70" lengthAdjust="spacingAndGlyphs">15:20</text>
<text x="905.26" y="945.60" font-size="10.71" font-weight="normal" fill="#6b6f76" textLength="24.70" lengthAdjust="spacingAndGlyphs">15:30</text>
<text x="954.36" y="945.60" font-size="10.71" font-weight="normal" fill="#6b6f76" textLength="24.70" lengthAdjust="spacingAndGlyphs">15:40</text>
<text x="1003.46" y="945.60" font-size="10.71" font-weight="normal" fill="#6b6f76" textLength="24.70" lengthAdjust="spacingAndGlyphs">15:50</text>
<text x="861.22" y="965.50" font-size="12.00" font-weight="bold" fill="#343741" textLength="87.21" lengthAdjust="spacingAndGlyphs">per 60 seconds</text>
<text x="1364.11" y="919.20" font-size="11.00" font-weight="normal" fill="#6b6f76" textLength="13.46" lengthAdjust="spacingAndGlyphs">0B</text>
<text x="1337.55" y="897.40" font-size="11.00" font-weight="normal" fill="#6b6f76" textLength="39.97" lengthAdjust="spacingAndGlyphs">953.7MB</text>
<text x="1350.79" y="875.60" font-size="11.00" font-weight="normal" fill="#6b6f76" textLength="26.70" lengthAdjust="spacingAndGlyphs">1.9GB</text>
<text x="1351.03" y="853.80" font-size="11.00" font-weight="normal" fill="#6b6f76" textLength="26.45" lengthAdjust="spacingAndGlyphs">2.8GB</text>
<text x="1351.18" y="832.00" font-size="11.00" font-weight="normal" fill="#6b6f76" textLength="26.31" lengthAdjust="spacingAndGlyphs">3.7GB</text>
<text x="1351.32" y="810.20" font-size="11.00" font-weight="normal" fill="#6b6f76" textLength="26.16" lengthAdjust="spacingAndGlyphs">4.7GB</text>
<text x="1351.13" y="788.40" font-size="11.00" font-weight="normal" fill="#6b6f76" textLength="26.36" lengthAdjust="spacingAndGlyphs">5.6GB</text>
<text x="1351.03" y="766.60" font-size="11.00" font-weight="normal" fill="#6b6f76" textLength="26.45" lengthAdjust="spacingAndGlyphs">6.5GB</text>
<text x="1351.03" y="744.80" font-size="11.00" font-weight="normal" fill="#6b6f76" textLength="26.45" lengthAdjust="spacingAndGlyphs">7.5GB</text>
<text x="1394.46" y="945.60" font-size="10.71" font-weight="normal" fill="#6b6f76" textLength="24.70" lengthAdjust="spacingAndGlyphs">15:00</text>
<text x="1435.81" y="945.60" font-size="10.71" font-weight="normal" fill="#6b6f76" textLength="24.70" lengthAdjust="spacingAndGlyphs">15:10</text>
<text x="1477.16" y="945.60" font-size="10.71" font-weight="normal" fill="#6b6f76" textLength="24.70" lengthAdjust="spacingAndGlyphs">15:20</text>
<text x="1518.51" y="945.60" font-size="10.71" font-weight="normal" fill="#6b6f76" textLength="24.70" lengthAdjust="spacingAndGlyphs">15:30</text>
<text x="1559.86" y="945.60" font-size="10.71" font-weight="normal" fill="#6b6f76" textLength="24.70" lengthAdjust="spacingAndGlyphs">15:40</text>
<text x="1601.21" y="945.60" font-size="10.71" font-weight="normal" fill="#6b6f76" textLength="24.70" lengthAdjust="spacingAndGlyphs">15:50</text>
<text x="1476.42" y="965.50" font-size="12.00" font-weight="bold" fill="#343741" textLength="87.31" lengthAdjust="spacingAndGlyphs">per 60 seconds</text>
</svg>
</body></html>
